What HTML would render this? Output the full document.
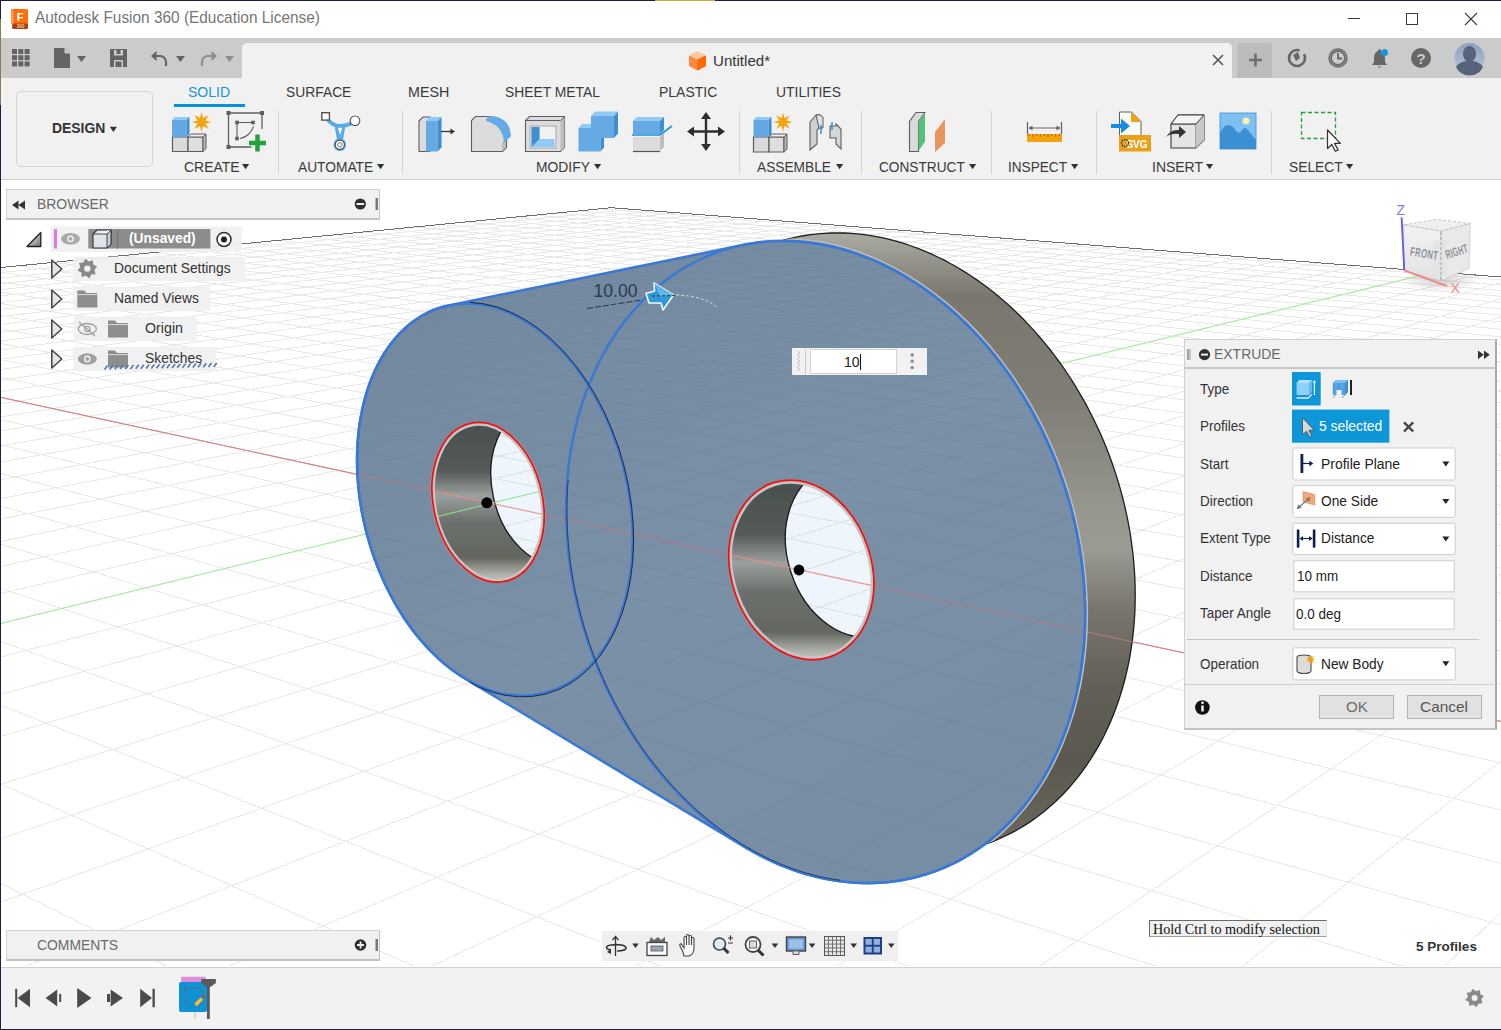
<!DOCTYPE html>
<html><head><meta charset="utf-8">
<style>
*{box-sizing:border-box;margin:0;padding:0}
html,body{width:1501px;height:1030px;overflow:hidden;background:#1c2045;font-family:"Liberation Sans",sans-serif}
body{position:relative}
.a{position:absolute}
.t{position:absolute;white-space:nowrap;line-height:1}
.lbl{font-size:13.6px;color:#3c3c3c}
.sep{position:absolute;top:111px;width:1px;height:63px;background:#d4d4d4}
.tri{display:inline-block;width:0;height:0;border-left:3.5px solid transparent;border-right:3.5px solid transparent;border-top:6px solid #3c3c3c;vertical-align:middle}
svg{position:absolute;overflow:visible}
</style></head><body>
<div class="a" style="left:1px;top:1px;width:1500px;height:1028px;background:#fff"></div>
<div class="a" style="left:655px;top:0;width:60px;height:1px;background:#c8b040"></div>
<div class="a" style="left:0;top:19px;width:1px;height:86px;background:#8a7d52"></div>
<svg style="left:0;top:0" width="40" height="38">
 <path d="M12.5 23 h14 a1.5 1.5 0 0 1 1.5 1.5 v3 a1.5 1.5 0 0 1 -1.5 1.5 h-13 a1.5 1.5 0 0 1 -1.5 -1.5z" fill="#a8410e"/>
 <path d="M11 10.5 a1.5 1.5 0 0 1 1.5 -1.5 h14 a1.5 1.5 0 0 1 1.5 1.5 v13 h-17z" fill="#ff6d0d"/>
 <path d="M11 11 l2.5 -1.5 v14 h-2.5z" fill="#ff9a50"/>
 <text x="20" y="20.5" font-size="11" font-weight="bold" fill="#fff" text-anchor="middle" font-family="Liberation Sans">F</text>
 <text x="20.5" y="27.5" font-size="4.5" font-weight="bold" fill="#f0c4a4" text-anchor="middle" font-family="Liberation Sans">360</text>
</svg>
<div class="t" style="left:34.97px;top:10.17px;font-size:15.99px;color:#767676;font-weight:normal;font-family:'Liberation Sans';transform:scaleX(0.9629);transform-origin:0 0;">Autodesk Fusion 360 (Education License)</div>
<div class="a" style="left:1348px;top:18px;width:12px;height:1px;background:#3a3a3a"></div>
<div class="a" style="left:1406px;top:13px;width:12px;height:12px;border:1px solid #3a3a3a"></div>
<svg style="left:1464px;top:12px" width="14" height="14"><path d="M1 1L13 13M13 1L1 13" stroke="#3a3a3a" stroke-width="1.1"/></svg>
<div class="a" style="left:1px;top:38px;width:1500px;height:40px;background:#cbcbcb"></div>
<div class="a" style="left:242px;top:43px;width:990px;height:36px;background:#f1f1f1;border-radius:5px 5px 0 0"></div>
<div class="a" style="left:1237px;top:43px;width:35px;height:35px;background:#bcbcbc;border-radius:4px 4px 0 0"></div>
<svg style="left:0;top:0" width="250" height="78"><rect x="12.0" y="49.0" width="5" height="5" fill="#646464"/><rect x="18.3" y="49.0" width="5" height="5" fill="#646464"/><rect x="24.6" y="49.0" width="5" height="5" fill="#646464"/><rect x="12.0" y="55.2" width="5" height="5" fill="#646464"/><rect x="18.3" y="55.2" width="5" height="5" fill="#646464"/><rect x="24.6" y="55.2" width="5" height="5" fill="#646464"/><rect x="12.0" y="61.4" width="5" height="5" fill="#646464"/><rect x="18.3" y="61.4" width="5" height="5" fill="#646464"/><rect x="24.6" y="61.4" width="5" height="5" fill="#646464"/><path d="M54 48 h11 l5 5 v15 h-16z" fill="#646464"/><path d="M65 48 v5 h5" fill="#cbcbcb" stroke="#cbcbcb" stroke-width="1"/><path d="M77 56 h9 l-4.5 6z" fill="#646464"/><path d="M110 49 h17 v18 h-17z" fill="#646464"/><rect x="114" y="50" width="9" height="5.5" fill="#cbcbcb"/><rect x="116.5" y="50" width="4" height="4" fill="#646464"/><rect x="114" y="60" width="9" height="7" fill="#cbcbcb"/><rect x="115.5" y="61.5" width="6" height="5.5" fill="#646464"/><path d="M166 66 v-4 a6 6 0 0 0 -6 -6 h-6" fill="none" stroke="#646464" stroke-width="2.2"/><path d="M151 56 l5.5 -5 v10z" fill="#646464"/><path d="M176 56 h9 l-4.5 6z" fill="#646464"/><path d="M202 66 v-4 a6 6 0 0 1 6 -6 h6" fill="none" stroke="#8e8e8e" stroke-width="2.2"/><path d="M217 56 l-5.5 -5 v10z" fill="#8e8e8e"/><path d="M225 56 h9 l-4.5 6z" fill="#8e8e8e"/></svg>
<svg style="left:0;top:0" width="1" height="1">
 <path d="M697.5 51.5 l8.5 4 v10.5 l-8.5 4.5 l-8.5 -4.5 v-10.5z" fill="#ff8a3d"/>
 <path d="M697.5 51.5 l8.5 4 l-8.5 4 l-8.5 -4z" fill="#ffc9a3"/>
 <path d="M697.5 59.5 l8.5 -4 v10.5 l-8.5 4.5z" fill="#ff6a00"/>
</svg>
<div class="t" style="left:712.84px;top:52.53px;font-size:15.55px;color:#333;font-weight:normal;font-family:'Liberation Sans';transform:scaleX(0.9714);transform-origin:0 0;">Untitled*</div>
<svg style="left:1212px;top:54px" width="12" height="12"><path d="M1 1L11 11M11 1L1 11" stroke="#555" stroke-width="1.6"/></svg>
<svg style="left:0;top:0" width="1" height="1">
 <path d="M1249 60 h13 M1255.5 53.5 v13" stroke="#6e6e6e" stroke-width="2.6"/>
 <circle cx="1297" cy="58" r="8" fill="none" stroke="#676767" stroke-width="2.6" stroke-dasharray="40 6"/>
 <path d="M1293 55 l5 -3 l2 6 l-4 3z" fill="#676767"/>
 <circle cx="1338" cy="58" r="9" fill="none" stroke="#676767" stroke-width="1.4"/>
 <circle cx="1338" cy="58" r="7" fill="none" stroke="#676767" stroke-width="1.8"/>
 <path d="M1338 53 v5.5 h4" fill="none" stroke="#676767" stroke-width="1.8"/>
 <path d="M1379.5 49 c-1 0 -1.5 1 -1.5 2 c-3 1 -4 4 -4 8 v3 l-2 3 h15 l-2 -3 v-3 c0 -4 -1 -7 -4 -8 c0 -1 -0.5 -2 -1.5 -2z" fill="#676767"/>
 <path d="M1377.5 66.5 h4 l-2 1.5z" fill="#676767"/>
 <circle cx="1384.5" cy="52.5" r="3.5" fill="#1a96e0"/>
 <circle cx="1421" cy="58" r="10" fill="#676767"/>
 <text x="1421" y="64" font-size="15" font-weight="bold" fill="#cbcbcb" text-anchor="middle" font-family="Liberation Sans">?</text>
 <defs><linearGradient id="av" x1="0" y1="0" x2="0" y2="1"><stop offset="0" stop-color="#8ea1bd"/><stop offset="1" stop-color="#b8c6d8"/></linearGradient></defs>
 <circle cx="1469.5" cy="58" r="15" fill="url(#av)"/>
 <ellipse cx="1469.5" cy="54" rx="6.5" ry="8" fill="#56637a"/>
 <path d="M1456 67 c3 -5 8 -6 13.5 -6 c5.5 0 10.5 1 13.5 6 a15 15 0 0 1 -27 0z" fill="#56637a"/>
</svg>
<div class="a" style="left:1px;top:78px;width:1500px;height:102px;background:#f1f1f1;border-bottom:1px solid #cdcdcd"></div>
<div class="a" style="left:16px;top:91px;width:137px;height:76px;border:1px solid #d5d5d5;border-radius:5px;background:#f1f1f1"></div>
<div class="t" style="left:51.97px;top:120.84px;font-size:14.24px;color:#333;font-weight:bold;font-family:'Liberation Sans';transform:scaleX(0.9772);transform-origin:0 0;">DESIGN</div>
<svg style="left:0;top:0" width="1" height="1"><path d="M109.8 126.7 h7.2 l-3.6 5.4z" fill="#333"/></svg>
<div class="t" style="left:188.35px;top:84.50px;font-size:14.53px;color:#1797d6;font-weight:normal;font-family:'Liberation Sans';transform:scaleX(0.9656);transform-origin:0 0;">SOLID</div>
<div class="t" style="left:285.76px;top:84.50px;font-size:14.53px;color:#3a3a3a;font-weight:normal;font-family:'Liberation Sans';transform:scaleX(0.9532);transform-origin:0 0;">SURFACE</div>
<div class="t" style="left:407.83px;top:84.50px;font-size:14.53px;color:#3a3a3a;font-weight:normal;font-family:'Liberation Sans';transform:scaleX(0.9843);transform-origin:0 0;">MESH</div>
<div class="t" style="left:505.36px;top:84.50px;font-size:14.53px;color:#3a3a3a;font-weight:normal;font-family:'Liberation Sans';transform:scaleX(0.9547);transform-origin:0 0;">SHEET METAL</div>
<div class="t" style="left:658.85px;top:84.50px;font-size:14.53px;color:#3a3a3a;font-weight:normal;font-family:'Liberation Sans';transform:scaleX(0.9637);transform-origin:0 0;">PLASTIC</div>
<div class="t" style="left:775.63px;top:84.50px;font-size:14.53px;color:#3a3a3a;font-weight:normal;font-family:'Liberation Sans';transform:scaleX(0.9582);transform-origin:0 0;">UTILITIES</div>
<div class="a" style="left:174px;top:104px;width:71px;height:3px;background:#0694d8"></div>
<div class="t" style="left:183.79px;top:159.57px;font-size:14.68px;color:#3a3a3a;font-weight:normal;font-family:'Liberation Sans';transform:scaleX(0.9531);transform-origin:0 0;">CREATE</div>
<div class="t" style="left:297.97px;top:159.57px;font-size:14.68px;color:#3a3a3a;font-weight:normal;font-family:'Liberation Sans';transform:scaleX(0.9379);transform-origin:0 0;">AUTOMATE</div>
<div class="t" style="left:536.06px;top:159.57px;font-size:14.68px;color:#3a3a3a;font-weight:normal;font-family:'Liberation Sans';transform:scaleX(0.9448);transform-origin:0 0;">MODIFY</div>
<div class="t" style="left:757.17px;top:159.57px;font-size:14.68px;color:#3a3a3a;font-weight:normal;font-family:'Liberation Sans';transform:scaleX(0.9353);transform-origin:0 0;">ASSEMBLE</div>
<div class="t" style="left:878.80px;top:159.57px;font-size:14.68px;color:#3a3a3a;font-weight:normal;font-family:'Liberation Sans';transform:scaleX(0.9311);transform-origin:0 0;">CONSTRUCT</div>
<div class="t" style="left:1008.15px;top:159.57px;font-size:14.68px;color:#3a3a3a;font-weight:normal;font-family:'Liberation Sans';transform:scaleX(0.9268);transform-origin:0 0;">INSPECT</div>
<div class="t" style="left:1151.71px;top:159.57px;font-size:14.68px;color:#3a3a3a;font-weight:normal;font-family:'Liberation Sans';transform:scaleX(0.9522);transform-origin:0 0;">INSERT</div>
<div class="t" style="left:1288.96px;top:159.57px;font-size:14.68px;color:#3a3a3a;font-weight:normal;font-family:'Liberation Sans';transform:scaleX(0.9413);transform-origin:0 0;">SELECT</div>
<div class="sep" style="left:278px"></div>
<div class="sep" style="left:402px"></div>
<div class="sep" style="left:739px"></div>
<div class="sep" style="left:861px"></div>
<div class="sep" style="left:991px"></div>
<div class="sep" style="left:1096px"></div>
<div class="sep" style="left:1271px"></div>
<svg style="left:0;top:0" width="1" height="1"><path d="M242 164 h7.2 l-3.6 5.2z" fill="#333"/><path d="M377 164 h7.2 l-3.6 5.2z" fill="#333"/><path d="M594 164 h7.2 l-3.6 5.2z" fill="#333"/><path d="M836 164 h7.2 l-3.6 5.2z" fill="#333"/><path d="M969 164 h7.2 l-3.6 5.2z" fill="#333"/><path d="M1071 164 h7.2 l-3.6 5.2z" fill="#333"/><path d="M1206 164 h7.2 l-3.6 5.2z" fill="#333"/><path d="M1346 164 h7.2 l-3.6 5.2z" fill="#333"/><path d="M172 137 h16 v15 h-16z" fill="#d9d9d9"/><path d="M172 137 l0 -0 h16 l-0 0z" fill="#d9d9d9"/><path d="M188 137 l0 -0 v15 l-0 0z" fill="#d9d9d9"/><path d="M172.5 137 h15.5 v14.5 h-15.5z" fill="#dadada" stroke="#5e5e5e" stroke-width="1.2"/><path d="M188 137 h15 v14.5 h-15z" fill="#dedede" stroke="#5e5e5e" stroke-width="1.2"/><path d="M188 137 l3 -3 h15 l-3 3z" fill="#ececec" stroke="#5e5e5e" stroke-width="1"/><path d="M203 137 l3 -3 v14.5 l-3 3z" fill="#b9b9b9" stroke="#5e5e5e" stroke-width="1"/><path d="M172 120 h14.5 v17 h-14.5z" fill="#62a8e3"/><path d="M172 120 l3 -3 h14.5 l-3 3z" fill="#8fcbf6"/><path d="M186.5 120 l3 -3 v17 l-3 3z" fill="#3f8ed0"/><polygon points="201.5,112.0 203.1,118.1 208.6,114.9 205.4,120.4 211.5,122.0 205.4,123.6 208.6,129.1 203.1,125.9 201.5,132.0 199.9,125.9 194.4,129.1 197.6,123.6 191.5,122.0 197.6,120.4 194.4,114.9 199.9,118.1" fill="#f5a30d"/><path d="M228.5 113 v34 M228.5 147 h23 M228.5 113 h33.5 M262 113 v16" fill="none" stroke="#5e5e5e" stroke-width="1.3"/><rect x="226.5" y="111" width="4" height="4" fill="#5e5e5e"/><rect x="260" y="111" width="4" height="4" fill="#5e5e5e"/><rect x="226.5" y="145" width="4" height="4" fill="#5e5e5e"/><path d="M237 122.5 h16 M237 122.5 v16 M240 138.5 q10 -2 13.5 -12" fill="none" stroke="#5e5e5e" stroke-width="1.1"/><rect x="235.2" y="120.7" width="3.6" height="3.6" fill="#5e5e5e"/><rect x="251.2" y="120.7" width="3.6" height="3.6" fill="#5e5e5e"/><rect x="235.2" y="136.7" width="3.6" height="3.6" fill="#5e5e5e"/><path d="M257.5 134.5 v17 M249 143 h17" stroke="#22a23c" stroke-width="4.5"/><path d="M327 118.5 Q332 126 340 126 Q347 126 352.5 122.5" fill="none" stroke="#5aaae4" stroke-width="4"/><path d="M334.5 125 h11 l-2.5 15 h-6z" fill="#5aaae4"/><path d="M337.8 127.8 h4.6 l-2.3 7.5z" fill="#f4f4f4"/><circle cx="339.8" cy="144.8" r="6.3" fill="#5aaae4"/><circle cx="339.8" cy="144.8" r="4.6" fill="#fafafa" stroke="#555" stroke-width="1.2"/><circle cx="339.8" cy="144.8" r="2.2" fill="none" stroke="#777" stroke-width="1"/><rect x="321.8" y="112.7" width="7.6" height="7.4" fill="#fff" stroke="#555" stroke-width="1.4"/><circle cx="355" cy="120.8" r="4.8" fill="#fff" stroke="#555" stroke-width="1.1"/><path d="M419 121 l4 -4 h7 v34.5 h-11z" fill="#dcdcdc" stroke="#5e5e5e" stroke-width="1.1"/><path d="M426 121 h11.5 v30.5 h-11.5z" fill="#65aae4"/><path d="M426 121 l4 -4 h11.5 l-4 4z" fill="#8fcbf6"/><path d="M437.5 121 l4 -4 v30.5 l-4 4z" fill="#3f8ed0"/><rect x="442" y="129.5" width="6" height="4" fill="#fff"/><path d="M441 131.5 h10" stroke="#333" stroke-width="1.4"/><path d="M455 131.5 l-4.5 -3 v6z" fill="#333"/><path d="M471.5 151.5 v-31 l4 -4 h9 q22 0 22 22 v9 l-4 4z" fill="#dcdcdc" stroke="#5e5e5e" stroke-width="1.1"/><path d="M502 151.5 v-9 l4 -4 v9z" fill="#bdbdbd"/><path d="M486 119 q3 -3 6 -3 q18 2 19 20 l-7 7 q-1 -18 -18 -22z" fill="#65aae4"/><path d="M525.5 151.5 v-31 l4 -4 h35 v31 l-4 4z" fill="#dcdcdc" stroke="#5e5e5e" stroke-width="1.1"/><path d="M560.5 151.5 v-31 l4 -4 v31z" fill="#bcbcbc"/><path d="M525.5 120.5 h35 l4 -4" fill="none" stroke="#5e5e5e" stroke-width="1"/><rect x="530" y="126" width="26" height="22" fill="#f1f1f1" stroke="#9a9a9a" stroke-width="0.8"/><path d="M531.5 127 h8 v12 h15 v8 h-23z" fill="#8fcbf6"/><path d="M531.5 127 h8 v12 l-8 8z" fill="#3f8ed0"/><path d="M591 116 l4 -4.5 h23 l-4 4.5z" fill="#8fcbf6"/><path d="M614 116 l4 -4.5 v22 l-4 4.5z" fill="#3f8ed0"/><rect x="591" y="116" width="23" height="22" fill="#65aae4"/><path d="M578.5 128 l3.5 -4 h9 v4z" fill="#8fcbf6"/><rect x="578.5" y="128" width="22" height="23.5" fill="#65aae4"/><path d="M600.5 138 v13.5 l3.5 -4 v-9.5z" fill="#3f8ed0"/><path d="M633 121 h27 v13 h-27z" fill="#65aae4"/><path d="M633 121 l4 -4 h27 l-4 4z" fill="#8fcbf6"/><path d="M660 121 l4 -4 v13 l-4 4z" fill="#3f8ed0"/><path d="M633 137 h27 v14 h-27z" fill="#dcdcdc"/><path d="M660 137 l4 -4 v14 l-4 4z" fill="#bdbdbd"/><path d="M633 151.5 h27" stroke="#555" stroke-width="1.2"/><path d="M632 135 h28 l12 -9" fill="none" stroke="#1a8fe0" stroke-width="1.6"/><path d="M706 115 v33 M690 131.5 h32" stroke="#2e2e2e" stroke-width="2.4"/><path d="M706 112 l-5 7 h10z M706 151 l-5 -7 h10z M687 131.5 l7 -5 v10z M725 131.5 l-7 -5 v10z" fill="#2e2e2e"/><path d="M753.5 137 h15.5 v15 h-15.5z" fill="#dadada" stroke="#5e5e5e" stroke-width="1.2"/><path d="M769 137 h15 v15 h-15z" fill="#dedede" stroke="#5e5e5e" stroke-width="1.2"/><path d="M769 137 l3 -3 h15 l-3 3z" fill="#ececec" stroke="#5e5e5e" stroke-width="1"/><path d="M784 137 l3 -3 v15 l-3 3z" fill="#b9b9b9" stroke="#5e5e5e" stroke-width="1"/><path d="M753.5 120 h15 v17 h-15z" fill="#62a8e3"/><path d="M753.5 120 l3 -3 h15 l-3 3z" fill="#8fcbf6"/><path d="M768.5 120 l3 -3 v17 l-3 3z" fill="#3f8ed0"/><polygon points="783.0,112.5 784.5,118.3 789.7,115.3 786.7,120.5 792.5,122.0 786.7,123.5 789.7,128.7 784.5,125.7 783.0,131.5 781.5,125.7 776.3,128.7 779.3,123.5 773.5,122.0 779.3,120.5 776.3,115.3 781.5,118.3" fill="#f5a30d"/><path d="M810 122 l6 -7 h4 v12 l-3 3 v14 l-7 6z" fill="#d0d0d0" stroke="#5e5e5e" stroke-width="1.1"/><path d="M816 115 h4 l3 2 v11 h-4z" fill="#e0e0e0" stroke="#5e5e5e" stroke-width="1"/><path d="M836 124 l5 5 v20 l-5 -5 v-6 h-6 v-12 h6z" fill="#d6d6d6" stroke="#5e5e5e" stroke-width="1.1"/><path d="M821 125 v9 M832 122 v8" stroke="#1a8fe0" stroke-width="1.4"/><path d="M909.5 151.5 v-30 l6.5 -9 h9 l-6.5 9 v30z" fill="#dadada" stroke="#5e5e5e" stroke-width="1.1"/><path d="M918.5 121.5 l6.5 -9 v29 l-6.5 9.5z" fill="#57c17c"/><path d="M935 132 l10 -13 v24 l-10 9z" fill="#e8945c"/><path d="M1027.5 122 v12 M1061.5 122 v12" stroke="#666" stroke-width="1.3"/><path d="M1029 128 h31" stroke="#666" stroke-width="1"/><path d="M1028.5 128 l4 -2.5 v5z M1060.5 128 l-4 -2.5 v5z" fill="#666"/><rect x="1027" y="134" width="35" height="8" fill="#f5a30d"/><path d="M1029.0 134 v2" stroke="#8a5a10" stroke-width="0.8"/><path d="M1032.8 134 v3" stroke="#8a5a10" stroke-width="0.8"/><path d="M1036.6 134 v2" stroke="#8a5a10" stroke-width="0.8"/><path d="M1040.4 134 v3" stroke="#8a5a10" stroke-width="0.8"/><path d="M1044.2 134 v2" stroke="#8a5a10" stroke-width="0.8"/><path d="M1048.0 134 v3" stroke="#8a5a10" stroke-width="0.8"/><path d="M1051.8 134 v2" stroke="#8a5a10" stroke-width="0.8"/><path d="M1055.6 134 v3" stroke="#8a5a10" stroke-width="0.8"/><path d="M1059.4 134 v2" stroke="#8a5a10" stroke-width="0.8"/><path d="M1119.5 112 h12 l9.5 9.5 v21 h-21.5z" fill="#fafafa" stroke="#5e5e5e" stroke-width="1"/><path d="M1131 112 l10 10 h-10z" fill="#f5a30d"/><rect x="1119" y="135" width="32" height="16.5" fill="#e7a21a"/><text x="1137" y="148" font-size="10" font-weight="bold" fill="#fff" font-family="Liberation Sans" text-anchor="middle">SVG</text><circle cx="1125" cy="143" r="3.5" fill="none" stroke="#333" stroke-width="1.3" stroke-dasharray="1.5 1"/><path d="M1111 124 h10 v-5.5 l9 7.5 l-9 7.5 v-5.5 h-10z" fill="#1a8ce0"/><path d="M1171 124 l7 -9 h26 v25 l-8 8 h-25z" fill="#e4e4e4" stroke="#3a3a3a" stroke-width="1.1"/><path d="M1171 124 h25 v24" fill="none" stroke="#5e5e5e" stroke-width="1"/><path d="M1196 124 l8 -9 v25 l-8 8z" fill="#c7c8cc"/><path d="M1171 124 l7 -9 h26 l-8 9z" fill="#f4f4f4" stroke="#3a3a3a" stroke-width="1"/><path d="M1166 137 q5 -8 13 -7 v-4 l7 6 l-7 6 v-4 q-8 -1 -13 3z" fill="#333"/><rect x="1220" y="113" width="36" height="36" fill="#7fc0f2"/><path d="M1220 149 v-16 q4 -8 8 -8 q5 0 8 6 q3 4 6 -1 q3 -4 6 0 q3 4 8 10 v9z" fill="#3b8fd3"/><circle cx="1246" cy="121" r="3.5" fill="#fbf0b0"/><rect x="1220" y="113" width="36" height="36" fill="none" stroke="#3b8fd3" stroke-width="0.8"/><rect x="1301.5" y="112.5" width="34" height="26" fill="none" stroke="#22a23c" stroke-width="1.3" stroke-dasharray="4 2.5"/><path d="M1327.5 130 v18.5 l4.3 -4 l3.5 6.8 l2.8 -1.4 l-3.5 -6.5 h5.8z" fill="#fafafa" stroke="#333" stroke-width="1.2" stroke-linejoin="round"/></svg>
<svg style="left:0;top:0" width="1501" height="1030" viewBox="0 0 1501 1030">
<defs><clipPath id="vpc"><rect x="1" y="181" width="1500" height="785"/></clipPath>
<linearGradient id="gry" gradientUnits="userSpaceOnUse" x1="880" y1="235" x2="880" y2="840">
<stop offset="0" stop-color="#aaaaa2"/><stop offset="0.1" stop-color="#7a776e"/><stop offset="0.27" stop-color="#7f7d75"/><stop offset="0.45" stop-color="#96958e"/><stop offset="0.52" stop-color="#9b9a93"/><stop offset="0.62" stop-color="#77756c"/><stop offset="0.75" stop-color="#625f56"/><stop offset="0.87" stop-color="#5b584f"/><stop offset="1" stop-color="#6a675f"/></linearGradient>
<linearGradient id="blu" gradientUnits="userSpaceOnUse" x1="500" y1="250" x2="900" y2="880">
<stop offset="0" stop-color="#72899f"/><stop offset="0.5" stop-color="#7a90a6"/><stop offset="1" stop-color="#778da4"/></linearGradient>
<linearGradient id="holeS" gradientUnits="userSpaceOnUse" x1="0" y1="423.8" x2="0" y2="580.7">
<stop offset="0" stop-color="#4a504f"/><stop offset="0.3" stop-color="#565c5a"/><stop offset="0.46" stop-color="#9ba19f"/><stop offset="0.62" stop-color="#6e726e"/><stop offset="0.85" stop-color="#63675f"/><stop offset="0.96" stop-color="#aeb1ab"/><stop offset="1" stop-color="#c0c2bd"/></linearGradient>
<linearGradient id="holeB" gradientUnits="userSpaceOnUse" x1="0" y1="481.6" x2="0" y2="658.2">
<stop offset="0" stop-color="#4a504f"/><stop offset="0.3" stop-color="#565c5a"/><stop offset="0.46" stop-color="#9ba19f"/><stop offset="0.62" stop-color="#6e726e"/><stop offset="0.85" stop-color="#63675f"/><stop offset="0.96" stop-color="#aeb1ab"/><stop offset="1" stop-color="#c0c2bd"/></linearGradient>
<linearGradient id="gline" gradientUnits="userSpaceOnUse" x1="0" y1="210" x2="0" y2="520"><stop offset="0" stop-color="#dadada"/><stop offset="0.35" stop-color="#e4e4e4"/><stop offset="1" stop-color="#ebebeb"/></linearGradient>
</defs>
<g clip-path="url(#vpc)">
<rect x="1" y="181" width="1500" height="785" fill="#fff"/>
<path d="M-17661.3 2041.6L631.9 209.3M-19547.8 2280.1L654.3 211.1M-21940.8 2582.7L677.1 212.8M-25075.7 2979.0L700.3 214.6M-29360.9 3520.8L724.0 216.5M-35571.9 4306.1L748.2 218.4M-45382.9 5546.5L772.9 220.3M-63201.2 7799.3L798.1 222.3M-56527.6 7195.2L823.7 224.3M-50819.2 6678.5L849.9 226.3M-45880.8 6231.4L876.7 228.4M-67194.2 9226.3L904.0 230.5M-59049.4 8392.1L931.9 232.7M-52261.9 7697.0L960.4 234.9M-46518.6 7108.7L989.5 237.2M-41595.6 6604.5L1019.3 239.5M-37329.0 6167.6L1049.7 241.9M-54222.7 9081.2L1080.8 244.3M-47364.9 8272.9L1112.6 246.8M-41633.7 7597.5L1145.1 249.3M-36772.5 7024.5L1178.4 251.9M-32597.2 6532.4L1212.5 254.6M-28972.2 6105.2L1247.4 257.3M-41685.2 8941.0L1283.1 260.1M-36036.8 8157.4L1319.7 262.9M-31303.4 7500.8L1357.2 265.9M-27279.2 6942.5L1395.7 268.9M-23815.9 6462.1L1435.1 271.9M-20804.0 6044.2L1475.5 275.1M-29560.2 8805.4L1517.0 278.3M-25049.1 8045.4L1559.5 281.6M-21258.7 7406.8L1603.2 285.0M-18028.9 6862.6L1648.1 288.5M-15244.0 6393.4L1694.2 292.1M-12817.9 5984.6L1741.6 295.8M-17827.7 8674.2L1790.4 299.6M-14386.7 7936.7L1840.5 303.5M-11487.9 7315.3L1892.0 307.6M-9012.4 6784.7L1945.1 311.7M-6873.9 6326.3L1999.8 316.0M-9395.8 9408.4L2056.1 320.4M-6468.9 8547.2L2114.2 324.9M-4035.3 7831.1L2174.0 329.6M-1980.0 7226.3L2235.8 334.4M-221.1 6708.7L2299.6 339.3M1301.2 6260.8L2365.4 344.5M2753.2 9258.3L2433.5 349.8M4533.7 8424.2L2503.8 355.3M6018.5 7728.6L2576.6 360.9M7275.5 7139.7L2651.9 366.8M8353.5 6634.7L2730.0 372.9M9288.1 6196.8L2810.8 379.2M14490.4 9113.3L2894.7 385.7M15196.7 8304.9L2981.7 392.5M15787.3 7629.0L3072.0 399.6M-4833.1 742.1L-33682.2 7375.6M-4514.9 710.8L-29819.2 6908.9M-4223.4 682.2L-26419.1 6498.1M-3955.4 655.9L-34300.8 9203.1M-3708.2 631.7L-29507.4 8486.7M-3479.5 609.2L-25410.1 7874.4M-3267.2 588.4L-21867.5 7344.9M-3069.6 569.0L-18774.2 6882.6M-2885.3 550.9L-16049.8 6475.4M-2713.0 534.0L-19576.1 9151.9M-2551.5 518.1L-15959.5 8444.2M-2399.9 503.2L-12864.9 7838.6M-2257.2 489.2L-10186.9 7314.6M-2122.7 476.0L-7846.7 6856.6M-1995.8 463.6L-5784.2 6453.0M-1875.7 451.8L-5059.3 9101.3M-1762.0 440.6L-2588.1 8402.1M-1654.2 430.1L-471.4 7803.3M-1551.8 420.0L1361.9 7284.6M-1454.4 410.5L2965.2 6830.9M-1361.6 401.3L4379.2 6430.9M-1273.2 392.7L9253.9 9051.5M-1188.8 384.4L10610.2 8360.7M-1108.2 376.5L11773.1 7768.3M-1031.2 368.9L12781.2 7254.9M-957.4 361.7L13663.4 6805.5M-886.7 354.7L14442.0 6408.9M-818.9 348.1L23367.9 9002.4M-753.8 341.7L23638.8 8319.7M-691.3 335.6L23871.2 7733.9M-631.2 329.7L24073.0 7225.5M-573.3 324.0L24249.6 6780.3M-517.7 318.5L24405.7 6387.1M-464.0 313.3L37286.7 8953.9M-412.3 308.2L36500.8 8279.3M-362.4 303.3L35825.7 7699.8M-314.2 298.5L35239.5 7196.5M-267.7 294.0L34725.6 6755.4M-222.7 289.6L34271.6 6365.6M-179.2 285.3L51014.3 8906.2M-137.1 281.2L49199.6 8239.4M-96.4 277.2L47639.0 7666.1M-56.9 273.3L46282.7 7167.8M-18.6 269.5L45093.1 6730.7M18.5 265.9L44041.2 6344.3M54.4 262.4L64554.8 8859.0M89.4 258.9L61738.1 8200.0M123.3 255.6L59313.6 7632.8M156.2 252.4L57204.8 7139.4M188.2 249.2L55353.8 6706.3M219.3 246.2L39627.8 4722.8M249.6 243.2L31105.8 3647.9M279.0 240.3L25760.2 2973.7M307.7 237.5L22094.1 2511.3M335.6 234.8L19423.4 2174.4M362.7 232.1L17391.1 1918.1M389.2 229.5L15792.9 1716.5M415.0 227.0L14503.0 1553.8M440.1 224.5L13440.1 1419.7M464.7 222.1L12549.0 1307.3M488.6 219.8L11791.4 1211.8M512.0 217.5L11139.2 1129.5M534.8 215.2L10571.9 1058.0M557.0 213.0L10073.9 995.1M578.7 210.9L9633.3 939.6M600.0 208.8L9240.6 890.0" fill="none" stroke="#e9e9e9" stroke-opacity="1.000" stroke-width="1" shape-rendering="crispEdges"/>
<path d="M0 267.6 L611.4 207.7 L1501 277" fill="none" stroke="#6e6e6e" stroke-width="1" shape-rendering="crispEdges"/>
<path d="M0 397.2 L1501 721.4" stroke="#f4a0a0" stroke-width="1.2"/>
<path d="M0 623.7 L1435.1 271.9" stroke="#a8f0a0" stroke-width="1.2"/>
<path d="M1135.2 595.2 L1135.1 603.2 L1134.9 611.2 L1134.4 619.2 L1133.8 627.1 L1133.0 634.9 L1132.0 642.7 L1130.9 650.4 L1129.6 658.1 L1128.1 665.6 L1126.4 673.1 L1124.6 680.5 L1122.6 687.8 L1120.4 695.0 L1118.1 702.1 L1115.6 709.0 L1112.9 715.9 L1110.1 722.7 L1107.1 729.3 L1104.0 735.8 L1100.7 742.1 L1097.2 748.4 L1093.6 754.4 L1089.8 760.4 L1086.0 766.2 L1081.9 771.8 L1077.7 777.3 L1073.4 782.6 L1069.0 787.8 L1064.4 792.7 L1059.7 797.5 L1054.8 802.2 L1049.9 806.6 L1044.8 810.9 L1039.6 815.0 L1034.3 818.9 L1028.9 822.6 L1023.4 826.1 L1017.8 829.5 L1012.1 832.6 L1006.3 835.5 L1000.4 838.2 L994.5 840.8 L988.4 843.1 L982.3 845.2 L976.1 847.1 L969.9 848.8 L963.5 850.3 L957.1 851.5 L950.7 852.6 L944.2 853.5 L937.7 854.1 L931.1 854.5 L924.5 854.7 L917.9 854.7 L911.2 854.5 L904.6 854.0 L897.9 853.4 L891.1 852.5 L884.4 851.4 L877.7 850.1 L871.0 848.6 L864.2 846.9 L857.5 844.9 L850.8 842.8 L844.2 840.5 L837.5 837.9 L830.9 835.2 L824.3 832.2 L817.8 829.1 L811.3 825.7 L804.8 822.2 L798.4 818.4 L792.0 814.5 L785.8 810.4 L779.5 806.1 L773.4 801.6 L767.3 796.9 L761.3 792.1 L755.4 787.1 L749.5 781.9 L743.8 776.6 L738.1 771.1 L732.5 765.4 L727.1 759.6 L721.7 753.7 L716.5 747.6 L711.4 741.3 L706.4 735.0 L701.5 728.4 L696.7 721.8 L692.0 715.0 L687.5 708.2 L683.1 701.2 L678.9 694.1 L674.8 686.9 L670.8 679.6 L667.0 672.2 L663.3 664.7 L659.8 657.1 L656.4 649.4 L653.2 641.7 L650.1 633.9 L647.2 626.1 L644.5 618.2 L641.9 610.2 L639.5 602.2 L637.2 594.2 L635.1 586.1 L633.2 578.0 L631.5 569.8 L629.9 561.7 L628.5 553.5 L627.3 545.3 L626.2 537.2 L625.3 529.0 L624.6 520.8 L624.1 512.7 L623.7 504.6 L623.6 496.5 L623.6 488.4 L623.7 480.4 L624.1 472.4 L624.6 464.5 L625.3 456.6 L626.2 448.8 L627.3 441.0 L628.5 433.4 L629.9 425.8 L631.5 418.2 L633.2 410.8 L635.1 403.5 L637.2 396.2 L639.5 389.1 L641.9 382.1 L644.5 375.1 L647.2 368.3 L650.1 361.6 L653.2 355.1 L656.4 348.6 L659.8 342.4 L663.3 336.2 L667.0 330.2 L670.8 324.3 L674.8 318.6 L678.9 313.1 L683.1 307.7 L687.5 302.4 L692.0 297.4 L696.7 292.5 L701.5 287.7 L706.4 283.2 L711.4 278.8 L716.5 274.6 L721.7 270.6 L727.1 266.8 L732.5 263.2 L738.1 259.8 L743.8 256.6 L749.5 253.5 L755.4 250.7 L761.3 248.1 L767.3 245.7 L773.4 243.4 L779.5 241.4 L785.8 239.6 L792.0 238.1 L798.4 236.7 L804.8 235.5 L811.3 234.6 L817.8 233.8 L824.3 233.3 L830.9 233.0 L837.5 232.9 L844.2 233.0 L850.8 233.4 L857.5 233.9 L864.2 234.7 L871.0 235.7 L877.7 236.8 L884.4 238.2 L891.1 239.9 L897.9 241.7 L904.6 243.7 L911.2 246.0 L917.9 248.4 L924.5 251.1 L931.1 253.9 L937.7 257.0 L944.2 260.2 L950.7 263.7 L957.1 267.3 L963.5 271.1 L969.9 275.2 L976.1 279.4 L982.3 283.8 L988.4 288.3 L994.5 293.1 L1000.4 298.0 L1006.3 303.1 L1012.1 308.3 L1017.8 313.7 L1023.4 319.3 L1028.9 325.1 L1034.3 330.9 L1039.6 337.0 L1044.8 343.1 L1049.9 349.5 L1054.8 355.9 L1059.7 362.5 L1064.4 369.2 L1069.0 376.0 L1073.4 382.9 L1077.7 390.0 L1081.9 397.1 L1086.0 404.4 L1089.8 411.8 L1093.6 419.2 L1097.2 426.7 L1100.7 434.3 L1104.0 442.0 L1107.1 449.8 L1110.1 457.6 L1112.9 465.5 L1115.6 473.4 L1118.1 481.4 L1120.4 489.4 L1122.6 497.5 L1124.6 505.6 L1126.4 513.7 L1128.1 521.9 L1129.6 530.0 L1130.9 538.2 L1132.0 546.4 L1133.0 554.5 L1133.8 562.7 L1134.4 570.9 L1134.9 579.0 L1135.1 587.1 L1135.2 595.2Z" fill="url(#gry)" stroke="#1e1e1e" stroke-width="1.3"/>
<path d="M0 397.2 L1501 721.4" stroke="#c98080" stroke-width="1" opacity="0.8"/>
<clipPath id="grc"><ellipse cx="879.37" cy="543.81" rx="318.53" ry="246.29" transform="rotate(69.949 879.37 543.81)" /></clipPath>
<g clip-path="url(#grc)"><ellipse cx="825.63" cy="562.02" rx="328.08" ry="250.70" transform="rotate(71.475 825.63 562.02)" fill="none" stroke="#bdbcb8" stroke-width="5.8"/></g>
<path d="M783.8 240.9 L779.3 240.9 L774.9 241.1 L770.4 241.3 L766.0 241.7 L761.6 242.1 L757.2 242.6 L752.8 243.3 L748.5 244.0 L744.1 244.8 L447.8 305.6 L444.4 306.5 L441.1 307.4 L437.8 308.5 L434.5 309.7 L431.3 311.0 L428.1 312.5 L424.9 314.1 L421.8 315.8 L418.8 317.7 L415.8 319.7 L412.8 321.8 L409.9 324.0 L407.1 326.4 L404.4 328.9 L401.7 331.4 L399.0 334.1 L396.4 337.0 L393.9 339.9 L391.5 342.9 L389.2 346.1 L386.9 349.4 L384.6 352.7 L382.5 356.2 L380.5 359.7 L378.5 363.4 L376.6 367.1 L374.8 371.0 L373.0 374.9 L371.4 378.9 L369.8 383.0 L368.3 387.2 L366.9 391.5 L365.6 395.8 L364.4 400.2 L363.3 404.7 L362.2 409.3 L361.3 413.9 L360.5 418.5 L359.7 423.2 L359.0 428.0 L358.5 432.8 L358.0 437.7 L357.6 442.6 L357.3 447.6 L357.1 452.5 L357.0 457.6 L357.0 462.6 L357.1 467.7 L357.3 472.8 L357.6 477.9 L358.0 483.0 L358.5 488.2 L359.0 493.3 L359.7 498.5 L360.5 503.6 L361.3 508.8 L362.2 513.9 L363.3 519.0 L364.4 524.2 L365.6 529.3 L366.9 534.4 L368.3 539.4 L369.8 544.4 L371.4 549.4 L373.0 554.4 L374.8 559.3 L376.6 564.2 L378.5 569.1 L380.5 573.9 L382.5 578.6 L384.6 583.3 L386.9 587.9 L389.2 592.5 L391.5 597.0 L393.9 601.4 L396.4 605.8 L399.0 610.1 L401.7 614.3 L404.4 618.5 L407.1 622.5 L409.9 626.5 L412.8 630.4 L415.8 634.2 L418.8 637.9 L421.8 641.5 L424.9 645.0 L428.1 648.4 L431.3 651.7 L434.5 654.9 L437.8 658.0 L441.1 661.0 L444.4 663.8 L447.8 666.6 L451.2 669.2 L454.7 671.8 L458.2 674.2 L461.7 676.4 L465.2 678.6 L744.1 846.6 L748.5 849.1 L752.8 851.6 L757.2 854.0 L761.6 856.3 L766.0 858.5 L770.4 860.6 L774.9 862.6 L779.3 864.5 L783.8 866.4 L788.3 868.1 L792.8 869.8 L797.3 871.3 L801.8 872.8 L806.3 874.2 L810.9 875.4 L815.4 876.6 L820.0 877.7 L824.5 878.7 L829.0 879.6 L833.6 880.3 L838.1 881.0 L842.7 881.6 L847.2 882.1 L851.7 882.5 L856.2 882.8 L860.7 883.0 L865.2 883.1 L869.7 883.1 L874.2 883.0 L878.6 882.8 L883.1 882.6 L887.5 882.2 L891.9 881.7 L896.3 881.1 L900.6 880.4 L905.0 879.6 L909.3 878.7 L913.6 877.8 L917.8 876.7 L922.1 875.5 L926.3 874.3 L930.4 872.9 L934.6 871.5 L938.7 869.9 L942.8 868.3 L946.8 866.5 L950.8 864.7 L954.8 862.8 L958.7 860.8 L962.6 858.6 L966.4 856.5 L970.2 854.2 L973.9 851.8 L977.6 849.3 L981.3 846.8 L984.9 844.1 L988.5 841.4 L992.0 838.6 L995.4 835.7 L998.9 832.7 L1002.2 829.6 L1005.5 826.5 L1008.8 823.3 L1012.0 820.0 L1015.1 816.6 L1018.2 813.1 L1021.2 809.6 L1024.1 805.9 L1027.0 802.2 L1029.9 798.5 L1032.6 794.6 L1035.4 790.7 L1038.0 786.8 L1040.6 782.7 L1043.1 778.6 L1045.5 774.4 L1047.9 770.2 L1050.2 765.8 L1052.5 761.5 L1054.6 757.0 L1056.7 752.5 L1058.8 748.0 L1060.7 743.4 L1062.6 738.7 L1064.4 734.0 L1066.2 729.2 L1067.9 724.4 L1069.5 719.5 L1071.0 714.6 L1072.4 709.6 L1073.8 704.6 L1075.1 699.6 L1076.3 694.5 L1077.4 689.3 L1078.5 684.1 L1079.5 678.9 L1080.4 673.7 L1081.2 668.4 L1082.0 663.1 L1082.6 657.7 L1083.2 652.3 L1083.8 646.9 L1084.2 641.5 L1084.6 636.0 L1084.8 630.6 L1085.0 625.1 L1085.2 619.5 L1085.2 614.0 L1085.2 614.0 L1085.2 608.5 L1085.0 602.9 L1084.8 597.3 L1084.6 591.7 L1084.2 586.1 L1083.8 580.5 L1083.2 574.9 L1082.6 569.3 L1082.0 563.7 L1081.2 558.0 L1080.4 552.4 L1079.5 546.8 L1078.5 541.2 L1077.4 535.6 L1076.3 530.0 L1075.1 524.4 L1073.8 518.8 L1072.4 513.3 L1071.0 507.7 L1069.5 502.2 L1067.9 496.7 L1066.2 491.2 L1064.4 485.7 L1062.6 480.3 L1060.7 474.8 L1058.8 469.4 L1056.7 464.1 L1054.6 458.7 L1052.5 453.4 L1050.2 448.2 L1047.9 442.9 L1045.5 437.7 L1043.1 432.6 L1040.6 427.4 L1038.0 422.4 L1035.4 417.3 L1032.6 412.3 L1029.9 407.4 L1027.0 402.5 L1024.1 397.6 L1021.2 392.8 L1018.2 388.1 L1015.1 383.4 L1012.0 378.7 L1008.8 374.1 L1005.5 369.6 L1002.2 365.1 L998.9 360.7 L995.4 356.4 L992.0 352.1 L988.5 347.9 L984.9 343.7 L981.3 339.6 L977.6 335.6 L973.9 331.7 L970.2 327.8 L966.4 324.0 L962.6 320.2 L958.7 316.6 L954.8 313.0 L950.8 309.5 L946.8 306.0 L942.8 302.7 L938.7 299.4 L934.6 296.2 L930.4 293.1 L926.3 290.1 L922.1 287.1 L917.8 284.3 L913.6 281.5 L909.3 278.8 L905.0 276.2 L900.6 273.7 L896.3 271.2 L891.9 268.9 L887.5 266.7 L883.1 264.5 L878.6 262.4 L874.2 260.5 L869.7 258.6 L865.2 256.8 L860.7 255.1 L856.2 253.5 L851.7 252.0 L847.2 250.5 L842.7 249.2 L838.1 248.0 L833.6 246.9 L829.0 245.8 L824.5 244.9 L820.0 244.1 L815.4 243.3 L810.9 242.7 L806.3 242.1 L801.8 241.7 L797.3 241.4 L792.8 241.1 L788.3 241.0 L783.8 240.9Z" fill="url(#blu)"/>
<clipPath id="hullc"><path d="M783.8 240.9 L779.3 240.9 L774.9 241.1 L770.4 241.3 L766.0 241.7 L761.6 242.1 L757.2 242.6 L752.8 243.3 L748.5 244.0 L744.1 244.8 L447.8 305.6 L444.4 306.5 L441.1 307.4 L437.8 308.5 L434.5 309.7 L431.3 311.0 L428.1 312.5 L424.9 314.1 L421.8 315.8 L418.8 317.7 L415.8 319.7 L412.8 321.8 L409.9 324.0 L407.1 326.4 L404.4 328.9 L401.7 331.4 L399.0 334.1 L396.4 337.0 L393.9 339.9 L391.5 342.9 L389.2 346.1 L386.9 349.4 L384.6 352.7 L382.5 356.2 L380.5 359.7 L378.5 363.4 L376.6 367.1 L374.8 371.0 L373.0 374.9 L371.4 378.9 L369.8 383.0 L368.3 387.2 L366.9 391.5 L365.6 395.8 L364.4 400.2 L363.3 404.7 L362.2 409.3 L361.3 413.9 L360.5 418.5 L359.7 423.2 L359.0 428.0 L358.5 432.8 L358.0 437.7 L357.6 442.6 L357.3 447.6 L357.1 452.5 L357.0 457.6 L357.0 462.6 L357.1 467.7 L357.3 472.8 L357.6 477.9 L358.0 483.0 L358.5 488.2 L359.0 493.3 L359.7 498.5 L360.5 503.6 L361.3 508.8 L362.2 513.9 L363.3 519.0 L364.4 524.2 L365.6 529.3 L366.9 534.4 L368.3 539.4 L369.8 544.4 L371.4 549.4 L373.0 554.4 L374.8 559.3 L376.6 564.2 L378.5 569.1 L380.5 573.9 L382.5 578.6 L384.6 583.3 L386.9 587.9 L389.2 592.5 L391.5 597.0 L393.9 601.4 L396.4 605.8 L399.0 610.1 L401.7 614.3 L404.4 618.5 L407.1 622.5 L409.9 626.5 L412.8 630.4 L415.8 634.2 L418.8 637.9 L421.8 641.5 L424.9 645.0 L428.1 648.4 L431.3 651.7 L434.5 654.9 L437.8 658.0 L441.1 661.0 L444.4 663.8 L447.8 666.6 L451.2 669.2 L454.7 671.8 L458.2 674.2 L461.7 676.4 L465.2 678.6 L744.1 846.6 L748.5 849.1 L752.8 851.6 L757.2 854.0 L761.6 856.3 L766.0 858.5 L770.4 860.6 L774.9 862.6 L779.3 864.5 L783.8 866.4 L788.3 868.1 L792.8 869.8 L797.3 871.3 L801.8 872.8 L806.3 874.2 L810.9 875.4 L815.4 876.6 L820.0 877.7 L824.5 878.7 L829.0 879.6 L833.6 880.3 L838.1 881.0 L842.7 881.6 L847.2 882.1 L851.7 882.5 L856.2 882.8 L860.7 883.0 L865.2 883.1 L869.7 883.1 L874.2 883.0 L878.6 882.8 L883.1 882.6 L887.5 882.2 L891.9 881.7 L896.3 881.1 L900.6 880.4 L905.0 879.6 L909.3 878.7 L913.6 877.8 L917.8 876.7 L922.1 875.5 L926.3 874.3 L930.4 872.9 L934.6 871.5 L938.7 869.9 L942.8 868.3 L946.8 866.5 L950.8 864.7 L954.8 862.8 L958.7 860.8 L962.6 858.6 L966.4 856.5 L970.2 854.2 L973.9 851.8 L977.6 849.3 L981.3 846.8 L984.9 844.1 L988.5 841.4 L992.0 838.6 L995.4 835.7 L998.9 832.7 L1002.2 829.6 L1005.5 826.5 L1008.8 823.3 L1012.0 820.0 L1015.1 816.6 L1018.2 813.1 L1021.2 809.6 L1024.1 805.9 L1027.0 802.2 L1029.9 798.5 L1032.6 794.6 L1035.4 790.7 L1038.0 786.8 L1040.6 782.7 L1043.1 778.6 L1045.5 774.4 L1047.9 770.2 L1050.2 765.8 L1052.5 761.5 L1054.6 757.0 L1056.7 752.5 L1058.8 748.0 L1060.7 743.4 L1062.6 738.7 L1064.4 734.0 L1066.2 729.2 L1067.9 724.4 L1069.5 719.5 L1071.0 714.6 L1072.4 709.6 L1073.8 704.6 L1075.1 699.6 L1076.3 694.5 L1077.4 689.3 L1078.5 684.1 L1079.5 678.9 L1080.4 673.7 L1081.2 668.4 L1082.0 663.1 L1082.6 657.7 L1083.2 652.3 L1083.8 646.9 L1084.2 641.5 L1084.6 636.0 L1084.8 630.6 L1085.0 625.1 L1085.2 619.5 L1085.2 614.0 L1085.2 614.0 L1085.2 608.5 L1085.0 602.9 L1084.8 597.3 L1084.6 591.7 L1084.2 586.1 L1083.8 580.5 L1083.2 574.9 L1082.6 569.3 L1082.0 563.7 L1081.2 558.0 L1080.4 552.4 L1079.5 546.8 L1078.5 541.2 L1077.4 535.6 L1076.3 530.0 L1075.1 524.4 L1073.8 518.8 L1072.4 513.3 L1071.0 507.7 L1069.5 502.2 L1067.9 496.7 L1066.2 491.2 L1064.4 485.7 L1062.6 480.3 L1060.7 474.8 L1058.8 469.4 L1056.7 464.1 L1054.6 458.7 L1052.5 453.4 L1050.2 448.2 L1047.9 442.9 L1045.5 437.7 L1043.1 432.6 L1040.6 427.4 L1038.0 422.4 L1035.4 417.3 L1032.6 412.3 L1029.9 407.4 L1027.0 402.5 L1024.1 397.6 L1021.2 392.8 L1018.2 388.1 L1015.1 383.4 L1012.0 378.7 L1008.8 374.1 L1005.5 369.6 L1002.2 365.1 L998.9 360.7 L995.4 356.4 L992.0 352.1 L988.5 347.9 L984.9 343.7 L981.3 339.6 L977.6 335.6 L973.9 331.7 L970.2 327.8 L966.4 324.0 L962.6 320.2 L958.7 316.6 L954.8 313.0 L950.8 309.5 L946.8 306.0 L942.8 302.7 L938.7 299.4 L934.6 296.2 L930.4 293.1 L926.3 290.1 L922.1 287.1 L917.8 284.3 L913.6 281.5 L909.3 278.8 L905.0 276.2 L900.6 273.7 L896.3 271.2 L891.9 268.9 L887.5 266.7 L883.1 264.5 L878.6 262.4 L874.2 260.5 L869.7 258.6 L865.2 256.8 L860.7 255.1 L856.2 253.5 L851.7 252.0 L847.2 250.5 L842.7 249.2 L838.1 248.0 L833.6 246.9 L829.0 245.8 L824.5 244.9 L820.0 244.1 L815.4 243.3 L810.9 242.7 L806.3 242.1 L801.8 241.7 L797.3 241.4 L792.8 241.1 L788.3 241.0 L783.8 240.9Z"/></clipPath>
<g clip-path="url(#hullc)"><path d="M-17661.3 2041.6L631.9 209.3M-19547.8 2280.1L654.3 211.1M-21940.8 2582.7L677.1 212.8M-25075.7 2979.0L700.3 214.6M-29360.9 3520.8L724.0 216.5M-35571.9 4306.1L748.2 218.4M-45382.9 5546.5L772.9 220.3M-63201.2 7799.3L798.1 222.3M-56527.6 7195.2L823.7 224.3M-50819.2 6678.5L849.9 226.3M-45880.8 6231.4L876.7 228.4M-67194.2 9226.3L904.0 230.5M-59049.4 8392.1L931.9 232.7M-52261.9 7697.0L960.4 234.9M-46518.6 7108.7L989.5 237.2M-41595.6 6604.5L1019.3 239.5M-37329.0 6167.6L1049.7 241.9M-54222.7 9081.2L1080.8 244.3M-47364.9 8272.9L1112.6 246.8M-41633.7 7597.5L1145.1 249.3M-36772.5 7024.5L1178.4 251.9M-32597.2 6532.4L1212.5 254.6M-28972.2 6105.2L1247.4 257.3M-41685.2 8941.0L1283.1 260.1M-36036.8 8157.4L1319.7 262.9M-31303.4 7500.8L1357.2 265.9M-27279.2 6942.5L1395.7 268.9M-23815.9 6462.1L1435.1 271.9M-20804.0 6044.2L1475.5 275.1M-29560.2 8805.4L1517.0 278.3M-25049.1 8045.4L1559.5 281.6M-21258.7 7406.8L1603.2 285.0M-18028.9 6862.6L1648.1 288.5M-15244.0 6393.4L1694.2 292.1M-12817.9 5984.6L1741.6 295.8M-17827.7 8674.2L1790.4 299.6M-14386.7 7936.7L1840.5 303.5M-11487.9 7315.3L1892.0 307.6M-9012.4 6784.7L1945.1 311.7M-6873.9 6326.3L1999.8 316.0M-9395.8 9408.4L2056.1 320.4M-6468.9 8547.2L2114.2 324.9M-4035.3 7831.1L2174.0 329.6M-1980.0 7226.3L2235.8 334.4M-221.1 6708.7L2299.6 339.3M1301.2 6260.8L2365.4 344.5M2753.2 9258.3L2433.5 349.8M4533.7 8424.2L2503.8 355.3M6018.5 7728.6L2576.6 360.9M7275.5 7139.7L2651.9 366.8M8353.5 6634.7L2730.0 372.9M9288.1 6196.8L2810.8 379.2M14490.4 9113.3L2894.7 385.7M15196.7 8304.9L2981.7 392.5M15787.3 7629.0L3072.0 399.6M-4833.1 742.1L-33682.2 7375.6M-4514.9 710.8L-29819.2 6908.9M-4223.4 682.2L-26419.1 6498.1M-3955.4 655.9L-34300.8 9203.1M-3708.2 631.7L-29507.4 8486.7M-3479.5 609.2L-25410.1 7874.4M-3267.2 588.4L-21867.5 7344.9M-3069.6 569.0L-18774.2 6882.6M-2885.3 550.9L-16049.8 6475.4M-2713.0 534.0L-19576.1 9151.9M-2551.5 518.1L-15959.5 8444.2M-2399.9 503.2L-12864.9 7838.6M-2257.2 489.2L-10186.9 7314.6M-2122.7 476.0L-7846.7 6856.6M-1995.8 463.6L-5784.2 6453.0M-1875.7 451.8L-5059.3 9101.3M-1762.0 440.6L-2588.1 8402.1M-1654.2 430.1L-471.4 7803.3M-1551.8 420.0L1361.9 7284.6M-1454.4 410.5L2965.2 6830.9M-1361.6 401.3L4379.2 6430.9M-1273.2 392.7L9253.9 9051.5M-1188.8 384.4L10610.2 8360.7M-1108.2 376.5L11773.1 7768.3M-1031.2 368.9L12781.2 7254.9M-957.4 361.7L13663.4 6805.5M-886.7 354.7L14442.0 6408.9M-818.9 348.1L23367.9 9002.4M-753.8 341.7L23638.8 8319.7M-691.3 335.6L23871.2 7733.9M-631.2 329.7L24073.0 7225.5M-573.3 324.0L24249.6 6780.3M-517.7 318.5L24405.7 6387.1M-464.0 313.3L37286.7 8953.9M-412.3 308.2L36500.8 8279.3M-362.4 303.3L35825.7 7699.8M-314.2 298.5L35239.5 7196.5M-267.7 294.0L34725.6 6755.4M-222.7 289.6L34271.6 6365.6M-179.2 285.3L51014.3 8906.2M-137.1 281.2L49199.6 8239.4M-96.4 277.2L47639.0 7666.1M-56.9 273.3L46282.7 7167.8M-18.6 269.5L45093.1 6730.7M18.5 265.9L44041.2 6344.3M54.4 262.4L64554.8 8859.0M89.4 258.9L61738.1 8200.0M123.3 255.6L59313.6 7632.8M156.2 252.4L57204.8 7139.4M188.2 249.2L55353.8 6706.3M219.3 246.2L39627.8 4722.8M249.6 243.2L31105.8 3647.9M279.0 240.3L25760.2 2973.7M307.7 237.5L22094.1 2511.3M335.6 234.8L19423.4 2174.4M362.7 232.1L17391.1 1918.1M389.2 229.5L15792.9 1716.5M415.0 227.0L14503.0 1553.8M440.1 224.5L13440.1 1419.7M464.7 222.1L12549.0 1307.3M488.6 219.8L11791.4 1211.8M512.0 217.5L11139.2 1129.5M534.8 215.2L10571.9 1058.0M557.0 213.0L10073.9 995.1M578.7 210.9L9633.3 939.6M600.0 208.8L9240.6 890.0" fill="none" stroke="#687e94" stroke-opacity="0.200" stroke-width="1" shape-rendering="crispEdges"/><path d="M0 397.2 L1501 721.4" stroke="#a07f92" stroke-width="1.4"/></g>
<path d="M783.8 240.9 L779.3 240.9 L774.9 241.1 L770.4 241.3 L766.0 241.7 L761.6 242.1 L757.2 242.6 L752.8 243.3 L748.5 244.0 L744.1 244.8 L447.8 305.6 L444.4 306.5 L441.1 307.4 L437.8 308.5 L434.5 309.7 L431.3 311.0 L428.1 312.5 L424.9 314.1 L421.8 315.8 L418.8 317.7 L415.8 319.7 L412.8 321.8 L409.9 324.0 L407.1 326.4 L404.4 328.9 L401.7 331.4 L399.0 334.1 L396.4 337.0 L393.9 339.9 L391.5 342.9 L389.2 346.1 L386.9 349.4 L384.6 352.7 L382.5 356.2 L380.5 359.7 L378.5 363.4 L376.6 367.1 L374.8 371.0 L373.0 374.9 L371.4 378.9 L369.8 383.0 L368.3 387.2 L366.9 391.5 L365.6 395.8 L364.4 400.2 L363.3 404.7 L362.2 409.3 L361.3 413.9 L360.5 418.5 L359.7 423.2 L359.0 428.0 L358.5 432.8 L358.0 437.7 L357.6 442.6 L357.3 447.6 L357.1 452.5 L357.0 457.6 L357.0 462.6 L357.1 467.7 L357.3 472.8 L357.6 477.9 L358.0 483.0 L358.5 488.2 L359.0 493.3 L359.7 498.5 L360.5 503.6 L361.3 508.8 L362.2 513.9 L363.3 519.0 L364.4 524.2 L365.6 529.3 L366.9 534.4 L368.3 539.4 L369.8 544.4 L371.4 549.4 L373.0 554.4 L374.8 559.3 L376.6 564.2 L378.5 569.1 L380.5 573.9 L382.5 578.6 L384.6 583.3 L386.9 587.9 L389.2 592.5 L391.5 597.0 L393.9 601.4 L396.4 605.8 L399.0 610.1 L401.7 614.3 L404.4 618.5 L407.1 622.5 L409.9 626.5 L412.8 630.4 L415.8 634.2 L418.8 637.9 L421.8 641.5 L424.9 645.0 L428.1 648.4 L431.3 651.7 L434.5 654.9 L437.8 658.0 L441.1 661.0 L444.4 663.8 L447.8 666.6 L451.2 669.2 L454.7 671.8 L458.2 674.2 L461.7 676.4 L465.2 678.6 L744.1 846.6 L748.5 849.1 L752.8 851.6 L757.2 854.0 L761.6 856.3 L766.0 858.5 L770.4 860.6 L774.9 862.6 L779.3 864.5 L783.8 866.4 L788.3 868.1 L792.8 869.8 L797.3 871.3 L801.8 872.8 L806.3 874.2 L810.9 875.4 L815.4 876.6 L820.0 877.7 L824.5 878.7 L829.0 879.6 L833.6 880.3 L838.1 881.0 L842.7 881.6 L847.2 882.1 L851.7 882.5 L856.2 882.8 L860.7 883.0 L865.2 883.1 L869.7 883.1 L874.2 883.0 L878.6 882.8 L883.1 882.6 L887.5 882.2 L891.9 881.7 L896.3 881.1 L900.6 880.4 L905.0 879.6 L909.3 878.7 L913.6 877.8 L917.8 876.7 L922.1 875.5 L926.3 874.3 L930.4 872.9 L934.6 871.5 L938.7 869.9 L942.8 868.3 L946.8 866.5 L950.8 864.7 L954.8 862.8 L958.7 860.8 L962.6 858.6 L966.4 856.5 L970.2 854.2 L973.9 851.8 L977.6 849.3 L981.3 846.8 L984.9 844.1 L988.5 841.4 L992.0 838.6 L995.4 835.7 L998.9 832.7 L1002.2 829.6 L1005.5 826.5 L1008.8 823.3 L1012.0 820.0 L1015.1 816.6 L1018.2 813.1 L1021.2 809.6 L1024.1 805.9 L1027.0 802.2 L1029.9 798.5 L1032.6 794.6 L1035.4 790.7 L1038.0 786.8 L1040.6 782.7 L1043.1 778.6 L1045.5 774.4 L1047.9 770.2 L1050.2 765.8 L1052.5 761.5 L1054.6 757.0 L1056.7 752.5 L1058.8 748.0 L1060.7 743.4 L1062.6 738.7 L1064.4 734.0 L1066.2 729.2 L1067.9 724.4 L1069.5 719.5 L1071.0 714.6 L1072.4 709.6 L1073.8 704.6 L1075.1 699.6 L1076.3 694.5 L1077.4 689.3 L1078.5 684.1 L1079.5 678.9 L1080.4 673.7 L1081.2 668.4 L1082.0 663.1 L1082.6 657.7 L1083.2 652.3 L1083.8 646.9 L1084.2 641.5 L1084.6 636.0 L1084.8 630.6 L1085.0 625.1 L1085.2 619.5 L1085.2 614.0 L1085.2 614.0 L1085.2 608.5 L1085.0 602.9 L1084.8 597.3 L1084.6 591.7 L1084.2 586.1 L1083.8 580.5 L1083.2 574.9 L1082.6 569.3 L1082.0 563.7 L1081.2 558.0 L1080.4 552.4 L1079.5 546.8 L1078.5 541.2 L1077.4 535.6 L1076.3 530.0 L1075.1 524.4 L1073.8 518.8 L1072.4 513.3 L1071.0 507.7 L1069.5 502.2 L1067.9 496.7 L1066.2 491.2 L1064.4 485.7 L1062.6 480.3 L1060.7 474.8 L1058.8 469.4 L1056.7 464.1 L1054.6 458.7 L1052.5 453.4 L1050.2 448.2 L1047.9 442.9 L1045.5 437.7 L1043.1 432.6 L1040.6 427.4 L1038.0 422.4 L1035.4 417.3 L1032.6 412.3 L1029.9 407.4 L1027.0 402.5 L1024.1 397.6 L1021.2 392.8 L1018.2 388.1 L1015.1 383.4 L1012.0 378.7 L1008.8 374.1 L1005.5 369.6 L1002.2 365.1 L998.9 360.7 L995.4 356.4 L992.0 352.1 L988.5 347.9 L984.9 343.7 L981.3 339.6 L977.6 335.6 L973.9 331.7 L970.2 327.8 L966.4 324.0 L962.6 320.2 L958.7 316.6 L954.8 313.0 L950.8 309.5 L946.8 306.0 L942.8 302.7 L938.7 299.4 L934.6 296.2 L930.4 293.1 L926.3 290.1 L922.1 287.1 L917.8 284.3 L913.6 281.5 L909.3 278.8 L905.0 276.2 L900.6 273.7 L896.3 271.2 L891.9 268.9 L887.5 266.7 L883.1 264.5 L878.6 262.4 L874.2 260.5 L869.7 258.6 L865.2 256.8 L860.7 255.1 L856.2 253.5 L851.7 252.0 L847.2 250.5 L842.7 249.2 L838.1 248.0 L833.6 246.9 L829.0 245.8 L824.5 244.9 L820.0 244.1 L815.4 243.3 L810.9 242.7 L806.3 242.1 L801.8 241.7 L797.3 241.4 L792.8 241.1 L788.3 241.0 L783.8 240.9Z" fill="none" stroke="#3a78d6" stroke-width="2.5"/>
<ellipse cx="494.88" cy="499.61" rx="199.63" ry="132.59" transform="rotate(75.355 494.88 499.61)" fill="none" stroke="#3a78d6" stroke-width="2.4"/>
<ellipse cx="825.63" cy="562.02" rx="328.08" ry="250.70" transform="rotate(71.475 825.63 562.02)" fill="none" stroke="#3a78d6" stroke-width="2.4"/>
<clipPath id="smr"><rect x="470" y="250" width="210" height="460"/></clipPath><clipPath id="bgl"><rect x="540" y="480" width="300" height="420"/></clipPath>
<g clip-path="url(#smr)"><ellipse cx="494.88" cy="499.61" rx="200.92" ry="133.44" transform="rotate(75.355 494.88 499.61)" fill="none" stroke="#111a2a" stroke-width="0.9" opacity="0.85"/></g>
<g clip-path="url(#bgl)"><ellipse cx="825.63" cy="562.02" rx="327.02" ry="249.88" transform="rotate(71.475 825.63 562.02)" fill="none" stroke="#16233a" stroke-width="0.8" opacity="0.75"/></g>
<path d="M543.2 515.5 L543.1 519.5 L542.9 523.5 L542.5 527.5 L542.0 531.4 L541.3 535.2 L540.5 538.9 L539.5 542.5 L538.4 546.0 L537.1 549.4 L535.7 552.6 L534.2 555.7 L532.5 558.7 L530.7 561.5 L528.8 564.1 L526.8 566.6 L524.7 568.9 L522.4 570.9 L520.1 572.9 L517.7 574.6 L515.2 576.1 L512.6 577.4 L510.0 578.5 L507.3 579.3 L504.5 580.0 L501.7 580.4 L498.9 580.7 L496.0 580.7 L493.1 580.5 L490.2 580.0 L487.3 579.4 L484.4 578.5 L481.5 577.5 L478.6 576.2 L475.8 574.7 L473.0 573.0 L470.2 571.1 L467.5 569.0 L464.8 566.8 L462.2 564.3 L459.6 561.7 L457.2 558.9 L454.8 556.0 L452.5 552.9 L450.4 549.7 L448.3 546.3 L446.3 542.8 L444.5 539.2 L442.8 535.5 L441.2 531.7 L439.7 527.8 L438.4 523.9 L437.2 519.9 L436.1 515.8 L435.2 511.7 L434.4 507.6 L433.8 503.5 L433.4 499.3 L433.1 495.2 L432.9 491.1 L432.9 487.0 L433.1 483.0 L433.4 479.0 L433.8 475.0 L434.4 471.2 L435.2 467.4 L436.1 463.8 L437.2 460.2 L438.4 456.8 L439.7 453.5 L441.2 450.3 L442.8 447.3 L444.5 444.4 L446.3 441.7 L448.3 439.1 L450.4 436.8 L452.5 434.6 L454.8 432.6 L457.2 430.8 L459.6 429.2 L462.2 427.8 L464.8 426.6 L467.5 425.6 L470.2 424.8 L473.0 424.3 L475.8 423.9 L478.6 423.8 L481.5 423.9 L484.4 424.2 L487.3 424.8 L490.2 425.5 L493.1 426.5 L496.0 427.6 L498.9 429.0 L501.7 430.6 L504.5 432.4 L507.3 434.4 L510.0 436.6 L512.6 438.9 L515.2 441.5 L517.7 444.2 L520.1 447.0 L522.4 450.0 L524.7 453.2 L526.8 456.5 L528.8 459.9 L530.7 463.5 L532.5 467.1 L534.2 470.9 L535.7 474.7 L537.1 478.6 L538.4 482.6 L539.5 486.6 L540.5 490.7 L541.3 494.8 L542.0 499.0 L542.5 503.1 L542.9 507.2 L543.1 511.4 L543.2 515.5Z" fill="url(#holeS)"/>
<clipPath id="hc488"><ellipse cx="488.05" cy="502.25" rx="79.48" ry="53.66" transform="rotate(77.451 488.05 502.25)" /></clipPath>
<clipPath id="hb488"><ellipse cx="544.95" cy="486.45" rx="77.97" ry="52.64" transform="rotate(77.451 544.95 486.45)" /></clipPath>
<g clip-path="url(#hc488)"><ellipse cx="544.95" cy="486.45" rx="77.97" ry="52.64" transform="rotate(77.451 544.95 486.45)" fill="#eef6fc"/><g clip-path="url(#hb488)"><path d="M-17661.3 2041.6L631.9 209.3M-19547.8 2280.1L654.3 211.1M-21940.8 2582.7L677.1 212.8M-25075.7 2979.0L700.3 214.6M-29360.9 3520.8L724.0 216.5M-35571.9 4306.1L748.2 218.4M-45382.9 5546.5L772.9 220.3M-63201.2 7799.3L798.1 222.3M-56527.6 7195.2L823.7 224.3M-50819.2 6678.5L849.9 226.3M-45880.8 6231.4L876.7 228.4M-67194.2 9226.3L904.0 230.5M-59049.4 8392.1L931.9 232.7M-52261.9 7697.0L960.4 234.9M-46518.6 7108.7L989.5 237.2M-41595.6 6604.5L1019.3 239.5M-37329.0 6167.6L1049.7 241.9M-54222.7 9081.2L1080.8 244.3M-47364.9 8272.9L1112.6 246.8M-41633.7 7597.5L1145.1 249.3M-36772.5 7024.5L1178.4 251.9M-32597.2 6532.4L1212.5 254.6M-28972.2 6105.2L1247.4 257.3M-41685.2 8941.0L1283.1 260.1M-36036.8 8157.4L1319.7 262.9M-31303.4 7500.8L1357.2 265.9M-27279.2 6942.5L1395.7 268.9M-23815.9 6462.1L1435.1 271.9M-20804.0 6044.2L1475.5 275.1M-29560.2 8805.4L1517.0 278.3M-25049.1 8045.4L1559.5 281.6M-21258.7 7406.8L1603.2 285.0M-18028.9 6862.6L1648.1 288.5M-15244.0 6393.4L1694.2 292.1M-12817.9 5984.6L1741.6 295.8M-17827.7 8674.2L1790.4 299.6M-14386.7 7936.7L1840.5 303.5M-11487.9 7315.3L1892.0 307.6M-9012.4 6784.7L1945.1 311.7M-6873.9 6326.3L1999.8 316.0M-9395.8 9408.4L2056.1 320.4M-6468.9 8547.2L2114.2 324.9M-4035.3 7831.1L2174.0 329.6M-1980.0 7226.3L2235.8 334.4M-221.1 6708.7L2299.6 339.3M1301.2 6260.8L2365.4 344.5M2753.2 9258.3L2433.5 349.8M4533.7 8424.2L2503.8 355.3M6018.5 7728.6L2576.6 360.9M7275.5 7139.7L2651.9 366.8M8353.5 6634.7L2730.0 372.9M9288.1 6196.8L2810.8 379.2M14490.4 9113.3L2894.7 385.7M15196.7 8304.9L2981.7 392.5M15787.3 7629.0L3072.0 399.6M-4833.1 742.1L-33682.2 7375.6M-4514.9 710.8L-29819.2 6908.9M-4223.4 682.2L-26419.1 6498.1M-3955.4 655.9L-34300.8 9203.1M-3708.2 631.7L-29507.4 8486.7M-3479.5 609.2L-25410.1 7874.4M-3267.2 588.4L-21867.5 7344.9M-3069.6 569.0L-18774.2 6882.6M-2885.3 550.9L-16049.8 6475.4M-2713.0 534.0L-19576.1 9151.9M-2551.5 518.1L-15959.5 8444.2M-2399.9 503.2L-12864.9 7838.6M-2257.2 489.2L-10186.9 7314.6M-2122.7 476.0L-7846.7 6856.6M-1995.8 463.6L-5784.2 6453.0M-1875.7 451.8L-5059.3 9101.3M-1762.0 440.6L-2588.1 8402.1M-1654.2 430.1L-471.4 7803.3M-1551.8 420.0L1361.9 7284.6M-1454.4 410.5L2965.2 6830.9M-1361.6 401.3L4379.2 6430.9M-1273.2 392.7L9253.9 9051.5M-1188.8 384.4L10610.2 8360.7M-1108.2 376.5L11773.1 7768.3M-1031.2 368.9L12781.2 7254.9M-957.4 361.7L13663.4 6805.5M-886.7 354.7L14442.0 6408.9M-818.9 348.1L23367.9 9002.4M-753.8 341.7L23638.8 8319.7M-691.3 335.6L23871.2 7733.9M-631.2 329.7L24073.0 7225.5M-573.3 324.0L24249.6 6780.3M-517.7 318.5L24405.7 6387.1M-464.0 313.3L37286.7 8953.9M-412.3 308.2L36500.8 8279.3M-362.4 303.3L35825.7 7699.8M-314.2 298.5L35239.5 7196.5M-267.7 294.0L34725.6 6755.4M-222.7 289.6L34271.6 6365.6M-179.2 285.3L51014.3 8906.2M-137.1 281.2L49199.6 8239.4M-96.4 277.2L47639.0 7666.1M-56.9 273.3L46282.7 7167.8M-18.6 269.5L45093.1 6730.7M18.5 265.9L44041.2 6344.3M54.4 262.4L64554.8 8859.0M89.4 258.9L61738.1 8200.0M123.3 255.6L59313.6 7632.8M156.2 252.4L57204.8 7139.4M188.2 249.2L55353.8 6706.3M219.3 246.2L39627.8 4722.8M249.6 243.2L31105.8 3647.9M279.0 240.3L25760.2 2973.7M307.7 237.5L22094.1 2511.3M335.6 234.8L19423.4 2174.4M362.7 232.1L17391.1 1918.1M389.2 229.5L15792.9 1716.5M415.0 227.0L14503.0 1553.8M440.1 224.5L13440.1 1419.7M464.7 222.1L12549.0 1307.3M488.6 219.8L11791.4 1211.8M512.0 217.5L11139.2 1129.5M534.8 215.2L10571.9 1058.0M557.0 213.0L10073.9 995.1M578.7 210.9L9633.3 939.6M600.0 208.8L9240.6 890.0" fill="none" stroke="#dde2e6" stroke-opacity="1.000" stroke-width="1" shape-rendering="crispEdges"/></g><ellipse cx="544.95" cy="486.45" rx="77.97" ry="52.64" transform="rotate(77.451 544.95 486.45)" fill="none" stroke="#1a1a1a" stroke-width="1.3"/><path d="M0 397.2 L1501 721.4" stroke="#f08a8a" stroke-width="1.3" opacity="0.75"/><path d="M0 623.7 L1435.1 271.9" stroke="#8ee88e" stroke-width="1.3" opacity="0.8"/></g>
<ellipse cx="488.05" cy="502.25" rx="79.48" ry="53.66" transform="rotate(77.451 488.05 502.25)" fill="none" stroke="#c4c4c4" stroke-width="4.2"/>
<ellipse cx="488.05" cy="502.25" rx="80.86" ry="54.59" transform="rotate(77.451 488.05 502.25)" fill="none" stroke="#f01010" stroke-width="1.8"/>
<path d="M872.6 583.5 L872.5 588.0 L872.2 592.6 L871.7 597.1 L871.0 601.4 L870.1 605.8 L869.1 610.0 L867.8 614.1 L866.3 618.0 L864.7 621.9 L862.9 625.6 L860.9 629.1 L858.8 632.5 L856.5 635.7 L854.0 638.7 L851.4 641.5 L848.7 644.2 L845.8 646.6 L842.8 648.8 L839.7 650.8 L836.4 652.5 L833.1 654.0 L829.7 655.3 L826.2 656.4 L822.7 657.2 L819.0 657.8 L815.4 658.1 L811.7 658.2 L807.9 658.0 L804.2 657.6 L800.4 657.0 L796.7 656.1 L792.9 654.9 L789.2 653.6 L785.5 651.9 L781.9 650.1 L778.3 648.1 L774.7 645.8 L771.3 643.3 L767.9 640.6 L764.6 637.7 L761.5 634.6 L758.4 631.4 L755.5 627.9 L752.7 624.3 L750.0 620.6 L747.4 616.7 L745.1 612.7 L742.8 608.5 L740.8 604.3 L738.9 600.0 L737.2 595.5 L735.6 591.0 L734.3 586.5 L733.1 581.9 L732.1 577.3 L731.3 572.6 L730.7 567.9 L730.3 563.3 L730.1 558.7 L730.1 554.0 L730.3 549.5 L730.7 545.0 L731.3 540.5 L732.1 536.2 L733.1 531.9 L734.3 527.8 L735.6 523.7 L737.2 519.8 L738.9 516.1 L740.8 512.4 L742.8 509.0 L745.1 505.7 L747.4 502.6 L750.0 499.7 L752.7 496.9 L755.5 494.4 L758.4 492.1 L761.5 490.0 L764.6 488.1 L767.9 486.5 L771.3 485.1 L774.7 483.9 L778.3 483.0 L781.9 482.3 L785.5 481.8 L789.2 481.6 L792.9 481.7 L796.7 481.9 L800.4 482.5 L804.2 483.3 L807.9 484.3 L811.7 485.5 L815.4 487.0 L819.0 488.7 L822.7 490.7 L826.2 492.9 L829.7 495.2 L833.1 497.8 L836.4 500.6 L839.7 503.6 L842.8 506.8 L845.8 510.1 L848.7 513.6 L851.4 517.3 L854.0 521.1 L856.5 525.1 L858.8 529.2 L860.9 533.4 L862.9 537.7 L864.7 542.0 L866.3 546.5 L867.8 551.0 L869.1 555.6 L870.1 560.2 L871.0 564.9 L871.7 569.5 L872.2 574.2 L872.5 578.8 L872.6 583.5Z" fill="url(#holeB)"/>
<clipPath id="hc801"><ellipse cx="801.35" cy="569.90" rx="90.03" ry="69.05" transform="rotate(72.309 801.35 569.90)" /></clipPath>
<clipPath id="hb801"><ellipse cx="854.95" cy="551.30" rx="87.87" ry="67.40" transform="rotate(72.309 854.95 551.30)" /></clipPath>
<g clip-path="url(#hc801)"><ellipse cx="854.95" cy="551.30" rx="87.87" ry="67.40" transform="rotate(72.309 854.95 551.30)" fill="#eef6fc"/><g clip-path="url(#hb801)"><path d="M-17661.3 2041.6L631.9 209.3M-19547.8 2280.1L654.3 211.1M-21940.8 2582.7L677.1 212.8M-25075.7 2979.0L700.3 214.6M-29360.9 3520.8L724.0 216.5M-35571.9 4306.1L748.2 218.4M-45382.9 5546.5L772.9 220.3M-63201.2 7799.3L798.1 222.3M-56527.6 7195.2L823.7 224.3M-50819.2 6678.5L849.9 226.3M-45880.8 6231.4L876.7 228.4M-67194.2 9226.3L904.0 230.5M-59049.4 8392.1L931.9 232.7M-52261.9 7697.0L960.4 234.9M-46518.6 7108.7L989.5 237.2M-41595.6 6604.5L1019.3 239.5M-37329.0 6167.6L1049.7 241.9M-54222.7 9081.2L1080.8 244.3M-47364.9 8272.9L1112.6 246.8M-41633.7 7597.5L1145.1 249.3M-36772.5 7024.5L1178.4 251.9M-32597.2 6532.4L1212.5 254.6M-28972.2 6105.2L1247.4 257.3M-41685.2 8941.0L1283.1 260.1M-36036.8 8157.4L1319.7 262.9M-31303.4 7500.8L1357.2 265.9M-27279.2 6942.5L1395.7 268.9M-23815.9 6462.1L1435.1 271.9M-20804.0 6044.2L1475.5 275.1M-29560.2 8805.4L1517.0 278.3M-25049.1 8045.4L1559.5 281.6M-21258.7 7406.8L1603.2 285.0M-18028.9 6862.6L1648.1 288.5M-15244.0 6393.4L1694.2 292.1M-12817.9 5984.6L1741.6 295.8M-17827.7 8674.2L1790.4 299.6M-14386.7 7936.7L1840.5 303.5M-11487.9 7315.3L1892.0 307.6M-9012.4 6784.7L1945.1 311.7M-6873.9 6326.3L1999.8 316.0M-9395.8 9408.4L2056.1 320.4M-6468.9 8547.2L2114.2 324.9M-4035.3 7831.1L2174.0 329.6M-1980.0 7226.3L2235.8 334.4M-221.1 6708.7L2299.6 339.3M1301.2 6260.8L2365.4 344.5M2753.2 9258.3L2433.5 349.8M4533.7 8424.2L2503.8 355.3M6018.5 7728.6L2576.6 360.9M7275.5 7139.7L2651.9 366.8M8353.5 6634.7L2730.0 372.9M9288.1 6196.8L2810.8 379.2M14490.4 9113.3L2894.7 385.7M15196.7 8304.9L2981.7 392.5M15787.3 7629.0L3072.0 399.6M-4833.1 742.1L-33682.2 7375.6M-4514.9 710.8L-29819.2 6908.9M-4223.4 682.2L-26419.1 6498.1M-3955.4 655.9L-34300.8 9203.1M-3708.2 631.7L-29507.4 8486.7M-3479.5 609.2L-25410.1 7874.4M-3267.2 588.4L-21867.5 7344.9M-3069.6 569.0L-18774.2 6882.6M-2885.3 550.9L-16049.8 6475.4M-2713.0 534.0L-19576.1 9151.9M-2551.5 518.1L-15959.5 8444.2M-2399.9 503.2L-12864.9 7838.6M-2257.2 489.2L-10186.9 7314.6M-2122.7 476.0L-7846.7 6856.6M-1995.8 463.6L-5784.2 6453.0M-1875.7 451.8L-5059.3 9101.3M-1762.0 440.6L-2588.1 8402.1M-1654.2 430.1L-471.4 7803.3M-1551.8 420.0L1361.9 7284.6M-1454.4 410.5L2965.2 6830.9M-1361.6 401.3L4379.2 6430.9M-1273.2 392.7L9253.9 9051.5M-1188.8 384.4L10610.2 8360.7M-1108.2 376.5L11773.1 7768.3M-1031.2 368.9L12781.2 7254.9M-957.4 361.7L13663.4 6805.5M-886.7 354.7L14442.0 6408.9M-818.9 348.1L23367.9 9002.4M-753.8 341.7L23638.8 8319.7M-691.3 335.6L23871.2 7733.9M-631.2 329.7L24073.0 7225.5M-573.3 324.0L24249.6 6780.3M-517.7 318.5L24405.7 6387.1M-464.0 313.3L37286.7 8953.9M-412.3 308.2L36500.8 8279.3M-362.4 303.3L35825.7 7699.8M-314.2 298.5L35239.5 7196.5M-267.7 294.0L34725.6 6755.4M-222.7 289.6L34271.6 6365.6M-179.2 285.3L51014.3 8906.2M-137.1 281.2L49199.6 8239.4M-96.4 277.2L47639.0 7666.1M-56.9 273.3L46282.7 7167.8M-18.6 269.5L45093.1 6730.7M18.5 265.9L44041.2 6344.3M54.4 262.4L64554.8 8859.0M89.4 258.9L61738.1 8200.0M123.3 255.6L59313.6 7632.8M156.2 252.4L57204.8 7139.4M188.2 249.2L55353.8 6706.3M219.3 246.2L39627.8 4722.8M249.6 243.2L31105.8 3647.9M279.0 240.3L25760.2 2973.7M307.7 237.5L22094.1 2511.3M335.6 234.8L19423.4 2174.4M362.7 232.1L17391.1 1918.1M389.2 229.5L15792.9 1716.5M415.0 227.0L14503.0 1553.8M440.1 224.5L13440.1 1419.7M464.7 222.1L12549.0 1307.3M488.6 219.8L11791.4 1211.8M512.0 217.5L11139.2 1129.5M534.8 215.2L10571.9 1058.0M557.0 213.0L10073.9 995.1M578.7 210.9L9633.3 939.6M600.0 208.8L9240.6 890.0" fill="none" stroke="#dde2e6" stroke-opacity="1.000" stroke-width="1" shape-rendering="crispEdges"/></g><ellipse cx="854.95" cy="551.30" rx="87.87" ry="67.40" transform="rotate(72.309 854.95 551.30)" fill="none" stroke="#1a1a1a" stroke-width="1.3"/><path d="M0 397.2 L1501 721.4" stroke="#f08a8a" stroke-width="1.3" opacity="0.75"/><path d="M0 623.7 L1435.1 271.9" stroke="#8ee88e" stroke-width="1.3" opacity="0.8"/></g>
<ellipse cx="801.35" cy="569.90" rx="90.03" ry="69.05" transform="rotate(72.309 801.35 569.90)" fill="none" stroke="#c4c4c4" stroke-width="4.2"/>
<ellipse cx="801.35" cy="569.90" rx="91.59" ry="70.25" transform="rotate(72.309 801.35 569.90)" fill="none" stroke="#f01010" stroke-width="1.8"/>
<circle cx="486.8" cy="502.8" r="5.5" fill="#000"/>
<circle cx="799" cy="570" r="5.4" fill="#000"/>
<path d="M587 308.5 L642 300" stroke="#1f2a3a" stroke-width="0.9" stroke-dasharray="6 2"/>
<path d="M676 295 Q705 296 718 308" fill="none" stroke="#d8dde2" stroke-width="1" stroke-dasharray="3 2"/>
<text x="593.5" y="297" font-family="Liberation Sans" font-size="17.6" fill="#2a3a52">10.00</text>
<path d="M646 293.5 L654.5 291 L654 283 L673.5 295 L663 310 L661 303 L649 303z" fill="#2f9ad8" stroke="#f4f8fb" stroke-width="1.6" stroke-linejoin="round"/>
<path d="M654 283 L673.5 295 L660 296z" fill="#5fb6ea"/>
<path d="M652 296 L676 295.5" stroke="#3a3a3a" stroke-width="1" stroke-dasharray="3 2"/>
</g></svg>
<svg style="left:0;top:0" width="1" height="1"><defs><radialGradient id="vcs" cx="0.5" cy="0.5" r="0.5"><stop offset="0" stop-color="#000" stop-opacity="0.18"/><stop offset="1" stop-color="#000" stop-opacity="0"/></radialGradient><linearGradient id="vcf" x1="0" y1="0" x2="0" y2="1"><stop offset="0" stop-color="#f2f2f2"/><stop offset="1" stop-color="#e2e2e2"/></linearGradient></defs><ellipse cx="1440" cy="280" rx="40" ry="12" fill="url(#vcs)"/><path d="M1403.7 224.8 L1441 231 L1441 281 L1404 270.4z" fill="url(#vcf)" stroke="#bdbdbd" stroke-width="0.6"/><path d="M1441 231 L1470.2 223.5 L1469 268.3 L1441 281z" fill="#e9e9e9" stroke="#bdbdbd" stroke-width="0.6"/><path d="M1403.7 224.8 L1437 219.4 L1470.2 223.5 L1441 231z" fill="#efefef" stroke="#b0b0b0" stroke-width="0.7" stroke-dasharray="3 2"/><rect x="1433.5" y="240" width="13" height="36" fill="#e0e2e5" opacity="0.8"/><path d="M1441 232 V281" stroke="#8a8a8a" stroke-width="0.7" stroke-dasharray="3 2"/><text x="0" y="0" font-family="Liberation Sans" font-weight="bold" font-size="12.5" fill="#8e9399" letter-spacing="0.6" transform="translate(1409.5 255.5) rotate(9) scale(0.62 1)">FRONT</text><text x="0" y="0" font-family="Liberation Sans" font-weight="bold" font-size="12.5" fill="#8e9399" letter-spacing="0.4" transform="translate(1447 259) rotate(-17) scale(0.56 1)">RIGHT</text><path d="M1401.6 217.4 L1404.3 270.4" stroke="#5a5af0" stroke-width="1.8"/><path d="M1404 270.4 L1447 286" stroke="#f08a8a" stroke-width="2"/><text x="1396.5" y="214.6" font-family="Liberation Sans" font-size="14" fill="#7a7af2">Z</text><text x="1450.5" y="293.4" font-family="Liberation Sans" font-size="14" fill="#f08a8a">X</text></svg>
<div class="a" style="left:792px;top:348px;width:135px;height:27px;background:#f1f1f1"></div>
<div class="a" style="left:805px;top:349px;width:1px;height:25px;background:#c9c9c9"></div>
<div class="a" style="left:810px;top:349px;width:87px;height:25px;background:#fff;border:1px solid #d2d2d2"></div>
<div class="t" style="left:844.43px;top:354.74px;font-size:14.24px;color:#222;font-weight:normal;font-family:'Liberation Sans';transform:scaleX(0.9858);transform-origin:0 0;">10</div>
<svg style="left:0;top:0" width="1" height="1"><path d="M860.5 354 v16" stroke="#111" stroke-width="1"/><circle cx="912.2" cy="355" r="1.7" fill="#8a8a8a"/><circle cx="912.2" cy="361.3" r="1.7" fill="#8a8a8a"/><circle cx="912.2" cy="367.6" r="1.7" fill="#8a8a8a"/><path d="M797 351 l3 2 l-3 2 l3 2 l-3 2 l3 2 l-3 2 l3 2 l-3 2 l3 2 l-3 2" fill="none" stroke="#c4c4c4" stroke-width="0.9"/></svg>
<div class="a" style="left:6px;top:189px;width:374px;height:31px;background:#f1f1f1;border:1px solid #d2d2d2;border-bottom:2px solid #c2c2c2;border-right:1px solid #c2c2c2"></div>
<div class="t" style="left:36.66px;top:196.74px;font-size:14.24px;color:#6a6a6a;font-weight:normal;font-family:'Liberation Sans';transform:scaleX(0.9768);transform-origin:0 0;">BROWSER</div>
<svg style="left:0;top:0" width="1" height="1"><path d="M12 205 l6.5 -4.5 v9z M18.5 205 l6.5 -4.5 v9z" fill="#333"/><circle cx="360.3" cy="204" r="5.6" fill="#2e2e2e"/><rect x="356.5" y="203" width="7.6" height="2" fill="#f1f1f1"/><rect x="375.5" y="198" width="2.5" height="12" fill="#777"/><rect x="51" y="226.5" width="190.6" height="25.5" fill="#f0f0f0" fill-opacity="0.93"/><rect x="73.3" y="256.7" width="171.7" height="24.3" fill="#f0f0f0" fill-opacity="0.93"/><rect x="73.3" y="286.6" width="137.2" height="24.4" fill="#f0f0f0" fill-opacity="0.93"/><rect x="73.3" y="316.6" width="123.4" height="24.4" fill="#f0f0f0" fill-opacity="0.93"/><rect x="73.3" y="347" width="143.1" height="24.0" fill="#f0f0f0" fill-opacity="0.93"/><defs><linearGradient id="trg" x1="0" y1="0" x2="1" y2="1"><stop offset="0" stop-color="#f0f0f0"/><stop offset="1" stop-color="#777"/></linearGradient></defs><path d="M27 246.5 l13.8 -14 v14z" fill="url(#trg)" stroke="#222" stroke-width="1.3" stroke-linejoin="round"/><rect x="53.8" y="229" width="3.2" height="19.5" fill="#e07be0"/><ellipse cx="70.5" cy="238.8" rx="9.5" ry="5.8" fill="#a9a9a9"/><circle cx="70.5" cy="238.8" r="3.4" fill="#f0f0f0"/><circle cx="70.5" cy="238.8" r="1.9" fill="#a9a9a9"/><rect x="88.3" y="229" width="122.1" height="19.5" fill="#8c8c8c"/><rect x="117" y="229" width="1.5" height="19.5" fill="#7a7a7a"/><path d="M93 234 l4 -4 h14 v14 l-4 4 h-14z" fill="#dfe3ea" stroke="#333" stroke-width="1.1"/><path d="M107 234 l4 -4 v14 l-4 4z" fill="#c8ccd4" stroke="#333" stroke-width="0.9"/><path d="M93 234 h14 l4 -4" fill="#f4f6f9" stroke="#333" stroke-width="0.9"/><circle cx="224" cy="239.4" r="7" fill="#fafafa" stroke="#333" stroke-width="1.5"/><circle cx="224" cy="239.4" r="3" fill="#222"/><path d="M51.8 260 l10 9 l-10 9z" fill="#e6e6e6" stroke="#4a4a4a" stroke-width="1.6" stroke-linejoin="round"/><path d="M51.8 290 l10 9 l-10 9z" fill="#e6e6e6" stroke="#4a4a4a" stroke-width="1.6" stroke-linejoin="round"/><path d="M51.8 320 l10 9 l-10 9z" fill="#e6e6e6" stroke="#4a4a4a" stroke-width="1.6" stroke-linejoin="round"/><path d="M51.8 350 l10 9 l-10 9z" fill="#e6e6e6" stroke="#4a4a4a" stroke-width="1.6" stroke-linejoin="round"/><polygon points="97.1,266.6 94.4,270.0 95.6,274.2 91.3,274.6 89.3,278.4 85.9,275.7 81.7,276.9 81.3,272.6 77.5,270.6 80.2,267.2 79.0,263.0 83.3,262.6 85.3,258.8 88.7,261.5 92.9,260.3 93.3,264.6" fill="#8a8a8a"/><circle cx="87.3" cy="268.6" r="3.2" fill="#f0f0f0"/><path d="M77.3 290.6 h7 l2 2.5 h11 v14.5 h-20z" fill="#8e8e8e"/><path d="M77.3 294.6 h20" stroke="#f0f0f0" stroke-width="0.8"/><path d="M108 320.6 h7 l2 2.5 h11 v14.5 h-20z" fill="#8e8e8e"/><path d="M108 324.6 h20" stroke="#f0f0f0" stroke-width="0.8"/><path d="M108 350.6 h7 l2 2.5 h11 v14.5 h-20z" fill="#8e8e8e"/><path d="M108 354.6 h20" stroke="#f0f0f0" stroke-width="0.8"/><ellipse cx="87.3" cy="329" rx="9" ry="5.5" fill="none" stroke="#a0a0a0" stroke-width="1.3"/><circle cx="87.3" cy="329" r="2.6" fill="none" stroke="#a0a0a0" stroke-width="1.2"/><path d="M79 322 l16 14" stroke="#a0a0a0" stroke-width="1.3"/><ellipse cx="87.3" cy="359" rx="9.5" ry="5.8" fill="#a0a0a0"/><circle cx="87.3" cy="359" r="3.4" fill="#f0f0f0"/><circle cx="87.3" cy="359" r="1.9" fill="#a0a0a0"/><path d="M104.5 369.5 l3 -4M109.7 369.4 l3 -4M114.9 369.3 l3 -4M120.1 369.1 l3 -4M125.3 369.0 l3 -4M130.5 368.9 l3 -4M135.7 368.8 l3 -4M140.9 368.7 l3 -4M146.1 368.5 l3 -4M151.3 368.4 l3 -4M156.5 368.3 l3 -4M161.7 368.2 l3 -4M166.9 368.1 l3 -4M172.1 367.9 l3 -4M177.3 367.8 l3 -4M182.5 367.7 l3 -4M187.7 367.6 l3 -4M192.9 367.5 l3 -4M198.1 367.3 l3 -4M203.3 367.2 l3 -4M208.5 367.1 l3 -4M213.7 367.0 l3 -4" stroke="#5677ad" stroke-width="1.6"/></svg>
<div class="t" style="left:129.41px;top:231.79px;font-size:13.95px;color:#fff;font-weight:bold;font-family:'Liberation Sans';transform:scaleX(0.9899);transform-origin:0 0;">(Unsaved)</div>
<div class="t" style="left:114.07px;top:261.40px;font-size:14.53px;color:#333;font-weight:normal;font-family:'Liberation Sans';transform:scaleX(0.9505);transform-origin:0 0;">Document Settings</div>
<div class="t" style="left:114.07px;top:291.40px;font-size:14.53px;color:#333;font-weight:normal;font-family:'Liberation Sans';transform:scaleX(0.9499);transform-origin:0 0;">Named Views</div>
<div class="t" style="left:145.33px;top:321.40px;font-size:14.53px;color:#333;font-weight:normal;font-family:'Liberation Sans';transform:scaleX(0.9829);transform-origin:0 0;">Origin</div>
<div class="t" style="left:145.36px;top:351.40px;font-size:14.53px;color:#333;font-weight:normal;font-family:'Liberation Sans';transform:scaleX(0.9558);transform-origin:0 0;">Sketches</div>
<div class="a" style="left:6px;top:930px;width:374px;height:31px;background:#f1f1f1;border:1px solid #d2d2d2;border-bottom:2px solid #c2c2c2;border-right:1px solid #c2c2c2"></div>
<div class="t" style="left:36.79px;top:937.74px;font-size:14.24px;color:#6a6a6a;font-weight:normal;font-family:'Liberation Sans';transform:scaleX(0.9767);transform-origin:0 0;">COMMENTS</div>
<svg style="left:0;top:0" width="1" height="1"><circle cx="360.5" cy="945" r="5.8" fill="#2e2e2e"/><path d="M357 945 h7 M360.5 941.5 v7" stroke="#f1f1f1" stroke-width="1.8"/><rect x="375.5" y="939" width="2.5" height="12" fill="#777"/></svg>
<div class="a" style="left:602px;top:931px;width:296px;height:30px;background:#efefef"></div>
<svg style="left:0;top:0" width="1" height="1"><path d="M615.5 937 v19" stroke="#333" stroke-width="1.3"/><path d="M612.5 940 l3 -3.5 l3 3.5" fill="none" stroke="#333" stroke-width="1.2"/><path d="M611 950 c-6 -1 -6 -4 0 -5 c8 -1 15 0 15 3 c0 2 -5 3 -9 3" fill="none" stroke="#333" stroke-width="1.6"/><path d="M607 952 l4 -3 v5z" fill="#333"/><path d="M632.2 943.5 h6.6 l-3.3 4.5z" fill="#333"/><rect x="647" y="942.5" width="20" height="13" fill="#fafafa" stroke="#444" stroke-width="1.3"/><rect x="651" y="946" width="12" height="5" fill="#9aa6b2" stroke="#555" stroke-width="0.8"/><path d="M649 942 l2 -5 l3 3 l4 -3 l3 3 l4 -3 v5" fill="#666"/><path d="M683 952 l-3 -6 c-1 -2 1 -3 2 -1 l2 3 v-10 c0 -2 2.5 -2 2.5 0 v7 v-9 c0 -2 2.5 -2 2.5 0 v9 v-8 c0 -2 2.5 -2 2.5 0 v8 v-6 c0 -2 2.5 -2 2.5 0 v9 c0 4 -2 7 -5 8 h-5z" fill="#fafafa" stroke="#444" stroke-width="1.1"/><circle cx="719.5" cy="944" r="6" fill="#dfeaf2" stroke="#444" stroke-width="1.6"/><path d="M723.5 948 l5 5" stroke="#333" stroke-width="3"/><path d="M728 938 h5 M730.5 935.5 v5 M728 943 h5" stroke="#333" stroke-width="1.2"/><circle cx="753" cy="944.5" r="7.5" fill="#fafafa" stroke="#444" stroke-width="1.8"/><rect x="749.5" y="941" width="7" height="7" fill="#ddd" stroke="#555" stroke-width="0.9"/><path d="M758 950 l5.5 5.5" stroke="#333" stroke-width="3"/><path d="M771.6 943.5 h6.6 l-3.3 4.5z" fill="#333"/><rect x="786.5" y="937" width="19" height="14" fill="#6f9ad8" stroke="#444" stroke-width="1.4"/><rect x="789" y="939.5" width="14" height="9" fill="#9cc0ea"/><path d="M793 951.5 v3 h6 v-3" fill="#ddd" stroke="#555" stroke-width="1"/><path d="M808.8 943.5 h6.6 l-3.3 4.5z" fill="#333"/><rect x="824.5" y="936.5" width="20" height="19" fill="#e8e8e8" stroke="#555" stroke-width="1"/><path d="M828.5 936.5 v19 M824.5 940.3 h20" stroke="#666" stroke-width="0.9"/><path d="M832.5 936.5 v19 M824.5 944.1 h20" stroke="#666" stroke-width="0.9"/><path d="M836.5 936.5 v19 M824.5 947.9 h20" stroke="#666" stroke-width="0.9"/><path d="M840.5 936.5 v19 M824.5 951.7 h20" stroke="#666" stroke-width="0.9"/><path d="M850.4 943.5 h6.6 l-3.3 4.5z" fill="#333"/><rect x="863.5" y="937" width="18.5" height="17.5" fill="#1f3e8a"/><rect x="865.5" y="939" width="6.3" height="5.8" fill="#8fb0dd"/><rect x="873.7" y="939" width="6.3" height="5.8" fill="#8fb0dd"/><rect x="865.5" y="946.7" width="6.3" height="5.8" fill="#8fb0dd"/><rect x="873.7" y="946.7" width="6.3" height="5.8" fill="#8fb0dd"/><path d="M888 943.5 h6.6 l-3.3 4.5z" fill="#333"/></svg>
<div class="a" style="left:1px;top:967px;width:1500px;height:62px;background:#f2f2f2;border-top:1px solid #cfcfcf"></div>
<svg style="left:0;top:0" width="1" height="1"><rect x="15.2" y="988.8" width="2" height="18.4" fill="#4a4a4a"/><path d="M17.6 998 L30 988.8 V1007.2z" fill="#4a4a4a"/><path d="M45.6 998 L57.2 989.5 V1006.5z" fill="#4a4a4a"/><rect x="59.2" y="994" width="2" height="8" fill="#4a4a4a"/><path d="M77.2 988 L91.5 998 L77.2 1008z" fill="#4a4a4a"/><rect x="107" y="994" width="3" height="8" fill="#4a4a4a"/><path d="M110.6 989.5 L123 998 L110.6 1006.5z" fill="#4a4a4a"/><path d="M140.2 988.8 L152 998 L140.2 1007.2z" fill="#4a4a4a"/><rect x="152.5" y="988.8" width="2.3" height="18.4" fill="#4a4a4a"/><rect x="181.2" y="976.8" width="24.6" height="6" fill="#e08ae0"/><rect x="179" y="982" width="28" height="30" rx="2" fill="#0d92d6"/><rect x="185" y="988" width="16" height="16" fill="none" stroke="#5a6d86" stroke-width="1.3" stroke-dasharray="4 2"/><path d="M195.5 1005 L202 998.5" stroke="#f2c233" stroke-width="3.5"/><path d="M201 997 l3 -2 l1 3z" fill="#e03030"/><rect x="194.3" y="1012" width="1.3" height="7" fill="#c8c8c8"/><path d="M201.2 979 h14.7 v4 l-5.5 4 h-3.7 l-5.5 -4z" fill="#5a5a5a"/><rect x="207" y="986" width="2.8" height="33" fill="#5a5a5a"/><polygon points="1483.9,996.1 1481.3,999.3 1482.5,1003.3 1478.4,1003.7 1476.5,1007.3 1473.3,1004.7 1469.3,1005.9 1468.9,1001.8 1465.3,999.9 1467.9,996.7 1466.7,992.7 1470.8,992.3 1472.7,988.7 1475.9,991.3 1479.9,990.1 1480.3,994.2" fill="#8a8a8a"/><circle cx="1474.6" cy="998" r="3" fill="#f2f2f2"/></svg>
<div class="a" style="left:1184px;top:339px;width:313px;height:391px;background:#f1f1f1;border:1px solid #d0d0d0;border-right:2px solid #a8a8a8;border-bottom:2px solid #c4c4c4"></div>
<div class="a" style="left:1185px;top:367px;width:311px;height:2px;background:#c6c6c6"></div>
<div class="a" style="left:1185px;top:684px;width:311px;height:1px;background:#cfcfcf"></div>
<div class="a" style="left:1187px;top:639px;width:292px;height:1px;background:#c4c4c4"></div>
<div class="t" style="left:1214.05px;top:347.20px;font-size:14.53px;color:#6a6a6a;font-weight:normal;font-family:'Liberation Sans';transform:scaleX(0.9611);transform-origin:0 0;">EXTRUDE</div>
<svg style="left:0;top:0" width="1" height="1"><rect x="1187.5" y="349" width="1" height="11" fill="#555"/><rect x="1189.5" y="349" width="1" height="11" fill="#999"/><circle cx="1204.5" cy="354.6" r="5.6" fill="#2e2e2e"/><rect x="1201" y="353.6" width="7" height="2" fill="#f1f1f1"/><path d="M1478 350.5 l5.8 4.2 l-5.8 4.2z M1484 350.5 l5.8 4.2 l-5.8 4.2z" fill="#333"/><rect x="1292" y="372" width="28.7" height="33.5" rx="1" fill="#0d96d8"/><path d="M1296.6 383 l3 -3 h12.2 v12 l-3 3 h-12.2z" fill="#8fd0fa"/><path d="M1296.6 383 l3 -3 h12.2 l-3 3z" fill="#b5e0fc"/><path d="M1308.8 383 l3 -3 v12 l-3 3z" fill="#6ab7ee"/><path d="M1296.6 398 h11.5 l3.6 -3.5" fill="none" stroke="#f4e6dc" stroke-width="1.3"/><path d="M1314.4 380.5 v14.5" stroke="#fff" stroke-width="1.3"/><path d="M1312.6 382 h3.6" stroke="#fff" stroke-width="0.8"/><path d="M1332.8 383 l3 -3 h12.2 v12 l-3 3 h-3 v-5 h-6 v5 h-3.2z" fill="#4f9ee0"/><path d="M1332.8 383 l3 -3 h12.2 l-3 3z" fill="#7cc0f0"/><path d="M1345 383 l3 -3 v12 l-3 3z" fill="#3f8ed0"/><path d="M1336 383 v12 M1342 383 v12" stroke="#66b0ea" stroke-width="1.2"/><path d="M1332.8 398 l3 -3 M1342 398 l3 -3" stroke="#999" stroke-width="1"/><path d="M1351 380 v15" stroke="#222" stroke-width="2"/><rect x="1292" y="409.6" width="97.4" height="33.1" fill="#0d96d8"/><path d="M1302.5 417.7 v17 l4 -3.5 l3 5.5 l2.2 -1 l-2.8 -5.5 h5.2z" fill="#d9d9d9" stroke="#555" stroke-width="0.9"/><path d="M1404 422.3 l9.2 9.2 M1413.2 422.3 l-9.2 9.2" stroke="#444" stroke-width="2.4"/><rect x="1292.9" y="448.0" width="162.3" height="32.0" rx="2" fill="#fff" stroke="#cdcdcd" stroke-width="1"/><path d="M1442.3 461.5 h7 l-3.5 5z" fill="#222"/><rect x="1292.9" y="485.7" width="162.3" height="31.6" rx="2" fill="#fff" stroke="#cdcdcd" stroke-width="1"/><path d="M1442.3 499.0 h7 l-3.5 5z" fill="#222"/><rect x="1292.9" y="523.2" width="162.3" height="31.4" rx="2" fill="#fff" stroke="#cdcdcd" stroke-width="1"/><path d="M1442.3 536.4 h7 l-3.5 5z" fill="#222"/><rect x="1292.9" y="647.8" width="162.3" height="32.1" rx="2" fill="#fff" stroke="#cdcdcd" stroke-width="1"/><path d="M1442.3 661.3 h7 l-3.5 5z" fill="#222"/><rect x="1293.9" y="560.8" width="160.2" height="31.0" fill="#fff" stroke="#cdcdcd" stroke-width="1"/><rect x="1293.9" y="598.8" width="160.2" height="30.3" fill="#fff" stroke="#cdcdcd" stroke-width="1"/><rect x="1300.5" y="454" width="2.8" height="19" fill="#0d1f4a"/><path d="M1303 463.5 h7" stroke="#0d1f4a" stroke-width="1.2"/><path d="M1313.3 463.5 l-4 -2.8 v5.6z" fill="#0d1f4a"/><path d="M1303 491.6 l11.8 3 v10.4 l-11.8 -3z" fill="#f2a878" stroke="#d98a58" stroke-width="0.6"/><path d="M1297.5 508.5 l12 -10.5" stroke="#777" stroke-width="1.2"/><path d="M1296.8 509.3 l1.5 -5 l3.3 3.5z M1310.5 497 l-1.5 5 l-3.3 -3.5z" fill="#777"/><rect x="1296.8" y="529.6" width="2.6" height="18" fill="#0d1f4a"/><rect x="1312.8" y="529.6" width="2.6" height="18" fill="#0d1f4a"/><path d="M1302 538.5 h8" stroke="#0d1f4a" stroke-width="1.1"/><path d="M1299.5 538.5 l3.5 -2.5 v5z M1312.6 538.5 l-3.5 -2.5 v5z" fill="#0d1f4a"/><path d="M1297 657 q1 -2 7 -2 q6 0 7 2 v14 q-1 2.5 -7 2.5 q-6 0 -7 -2.5z" fill="#dcdcdc" stroke="#4a4a4a" stroke-width="1.1"/><polygon points="1310.5,654.5 1311.3,657.5 1314.0,656.0 1312.5,658.7 1315.5,659.5 1312.5,660.3 1314.0,663.0 1311.3,661.5 1310.5,664.5 1309.7,661.5 1307.0,663.0 1308.5,660.3 1305.5,659.5 1308.5,658.7 1307.0,656.0 1309.7,657.5" fill="#f5a30d"/><circle cx="1202.4" cy="707.5" r="7.3" fill="#111"/><rect x="1201.3" y="705.5" width="2.4" height="6" fill="#fff"/><circle cx="1202.5" cy="702.8" r="1.3" fill="#fff"/></svg>
<div class="a" style="left:1319px;top:695px;width:75px;height:24px;background:#e1e1e1;border:1px solid #b4b4b4"></div>
<div class="a" style="left:1407px;top:695px;width:75px;height:24px;background:#e1e1e1;border:1px solid #b4b4b4"></div>
<div class="t" style="left:1345.59px;top:699.30px;font-size:15.12px;color:#6d6d6d;font-weight:normal;font-family:'Liberation Sans';transform:scaleX(0.9976);transform-origin:0 0;">OK</div>
<div class="t" style="left:1420.21px;top:699.30px;font-size:15.12px;color:#555;font-weight:normal;font-family:'Liberation Sans';transform:scaleX(1.0205);transform-origin:0 0;">Cancel</div>
<div class="t" style="left:1200.40px;top:381.97px;font-size:14.10px;color:#333;font-weight:normal;font-family:'Liberation Sans';transform:scaleX(0.9550);transform-origin:0 0;">Type</div>
<div class="t" style="left:1199.60px;top:418.97px;font-size:14.10px;color:#333;font-weight:normal;font-family:'Liberation Sans';transform:scaleX(0.9550);transform-origin:0 0;">Profiles</div>
<div class="t" style="left:1200.08px;top:456.67px;font-size:14.10px;color:#333;font-weight:normal;font-family:'Liberation Sans';transform:scaleX(0.9550);transform-origin:0 0;">Start</div>
<div class="t" style="left:1199.60px;top:493.67px;font-size:14.10px;color:#333;font-weight:normal;font-family:'Liberation Sans';transform:scaleX(0.9550);transform-origin:0 0;">Direction</div>
<div class="t" style="left:1199.60px;top:531.47px;font-size:14.10px;color:#333;font-weight:normal;font-family:'Liberation Sans';transform:scaleX(0.9550);transform-origin:0 0;">Extent Type</div>
<div class="t" style="left:1199.60px;top:568.67px;font-size:14.10px;color:#333;font-weight:normal;font-family:'Liberation Sans';transform:scaleX(0.9550);transform-origin:0 0;">Distance</div>
<div class="t" style="left:1200.40px;top:606.47px;font-size:14.10px;color:#333;font-weight:normal;font-family:'Liberation Sans';transform:scaleX(0.9550);transform-origin:0 0;">Taper Angle</div>
<div class="t" style="left:1200.07px;top:656.97px;font-size:14.10px;color:#333;font-weight:normal;font-family:'Liberation Sans';transform:scaleX(0.9550);transform-origin:0 0;">Operation</div>
<div class="t" style="left:1319.14px;top:418.62px;font-size:14.39px;color:#fff;font-weight:normal;font-family:'Liberation Sans';transform:scaleX(0.9643);transform-origin:0 0;">5 selected</div>
<div class="t" style="left:1320.66px;top:456.52px;font-size:14.39px;color:#222;font-weight:normal;font-family:'Liberation Sans';transform:scaleX(0.9702);transform-origin:0 0;">Profile Plane</div>
<div class="t" style="left:1321.15px;top:493.62px;font-size:14.39px;color:#222;font-weight:normal;font-family:'Liberation Sans';transform:scaleX(0.9550);transform-origin:0 0;">One Side</div>
<div class="t" style="left:1320.67px;top:531.32px;font-size:14.39px;color:#222;font-weight:normal;font-family:'Liberation Sans';transform:scaleX(0.9550);transform-origin:0 0;">Distance</div>
<div class="t" style="left:1296.68px;top:569.17px;font-size:14.10px;color:#222;font-weight:normal;font-family:'Liberation Sans';transform:scaleX(0.9550);transform-origin:0 0;">10 mm</div>
<div class="t" style="left:1295.97px;top:606.67px;font-size:14.10px;color:#222;font-weight:normal;font-family:'Liberation Sans';transform:scaleX(0.9550);transform-origin:0 0;">0.0 deg</div>
<div class="t" style="left:1320.67px;top:657.02px;font-size:14.39px;color:#222;font-weight:normal;font-family:'Liberation Sans';transform:scaleX(0.9550);transform-origin:0 0;">New Body</div>
<div class="a" style="left:1149px;top:920px;width:178px;height:17px;background:#f0f0f0;border:1px solid #6a6a6a;border-right-color:#e0e0e0;border-bottom-color:#a0a0a0"></div>
<div class="t" style="left:1153.19px;top:920.79px;font-size:15.29px;color:#111;font-weight:normal;font-family:'Liberation Serif';transform:scaleX(0.9270);transform-origin:0 0;">Hold Ctrl to modify selection</div>
<div class="t" style="left:1416.38px;top:939.58px;font-size:13.37px;color:#333;font-weight:bold;font-family:'Liberation Sans';transform:scaleX(1.0129);transform-origin:0 0;">5 Profiles</div>
</body></html>
